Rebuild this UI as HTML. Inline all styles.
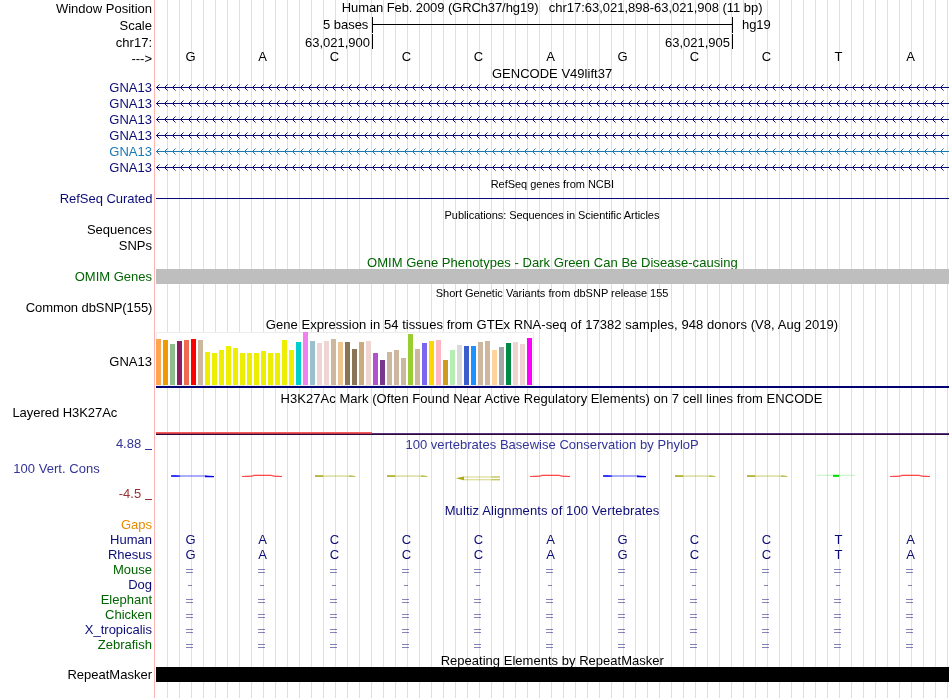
<!DOCTYPE html><html><head><meta charset="utf-8"><style>html,body{margin:0;padding:0;background:#fff;overflow:hidden}svg{display:block;will-change:transform}</style></head><body>
<svg width="950" height="698" viewBox="0 0 950 698" shape-rendering="crispEdges">
<rect x="0" y="0" width="950" height="698" fill="#fff"/>
<path d="M167.5 0V698M179.5 0V698M191.5 0V698M203.5 0V698M215.5 0V698M227.5 0V698M239.5 0V698M251.5 0V698M263.5 0V698M275.5 0V698M287.5 0V698M299.5 0V698M311.5 0V698M323.5 0V698M335.5 0V698M347.5 0V698M359.5 0V698M371.5 0V698M383.5 0V698M395.5 0V698M407.5 0V698M419.5 0V698M431.5 0V698M443.5 0V698M455.5 0V698M467.5 0V698M479.5 0V698M491.5 0V698M503.5 0V698M515.5 0V698M527.5 0V698M539.5 0V698M551.5 0V698M563.5 0V698M575.5 0V698M587.5 0V698M599.5 0V698M611.5 0V698M623.5 0V698M635.5 0V698M647.5 0V698M659.5 0V698M671.5 0V698M683.5 0V698M695.5 0V698M707.5 0V698M719.5 0V698M731.5 0V698M743.5 0V698M755.5 0V698M767.5 0V698M779.5 0V698M791.5 0V698M803.5 0V698M815.5 0V698M827.5 0V698M839.5 0V698M851.5 0V698M863.5 0V698M875.5 0V698M887.5 0V698M899.5 0V698M911.5 0V698M923.5 0V698M935.5 0V698M947.5 0V698" stroke="#dcdcff" stroke-width="1" fill="none"/>
<path d="M154.5 0V698" stroke="#ffb4b4" stroke-width="1"/>
<text x="152" y="13" font-size="13" text-anchor="end" fill="#000" font-family="Liberation Sans, sans-serif"  shape-rendering="auto">Window Position</text>
<text x="341.73" y="12" font-size="13" text-anchor="start" fill="#000" font-family="Liberation Sans, sans-serif"  textLength="196.77" lengthAdjust="spacing" shape-rendering="auto">Human Feb. 2009 (GRCh37/hg19)</text>
<text x="548.75" y="12" font-size="13" text-anchor="start" fill="#000" font-family="Liberation Sans, sans-serif"  textLength="213.86" lengthAdjust="spacing" shape-rendering="auto">chr17:63,021,898-63,021,908 (11 bp)</text>
<text x="152" y="30" font-size="13" text-anchor="end" fill="#000" font-family="Liberation Sans, sans-serif"  shape-rendering="auto">Scale</text>
<text x="322.88" y="29" font-size="13" text-anchor="start" fill="#000" font-family="Liberation Sans, sans-serif"  textLength="45.49" lengthAdjust="spacing" shape-rendering="auto">5 bases</text>
<path d="M372 24.5H733M372.5 17V33M732.5 17V33M372.5 34V49M732.5 34V49" stroke="#000" stroke-width="1"/>
<text x="742.1" y="29" font-size="13" text-anchor="start" fill="#000" font-family="Liberation Sans, sans-serif"  textLength="28.52" lengthAdjust="spacing" shape-rendering="auto">hg19</text>
<text x="152" y="47" font-size="13" text-anchor="end" fill="#000" font-family="Liberation Sans, sans-serif"  shape-rendering="auto">chr17:</text>
<text x="370" y="47" font-size="13" text-anchor="end" fill="#000" font-family="Liberation Sans, sans-serif"  shape-rendering="auto">63,021,900</text>
<text x="730" y="47" font-size="13" text-anchor="end" fill="#000" font-family="Liberation Sans, sans-serif"  shape-rendering="auto">63,021,905</text>
<text x="152" y="63" font-size="13" text-anchor="end" fill="#000" font-family="Liberation Sans, sans-serif"  shape-rendering="auto">---&gt;</text>
<text x="190.5" y="61" font-size="13" text-anchor="middle" fill="#000" font-family="Liberation Sans, sans-serif"  shape-rendering="auto">G</text>
<text x="262.5" y="61" font-size="13" text-anchor="middle" fill="#000" font-family="Liberation Sans, sans-serif"  shape-rendering="auto">A</text>
<text x="334.5" y="61" font-size="13" text-anchor="middle" fill="#000" font-family="Liberation Sans, sans-serif"  shape-rendering="auto">C</text>
<text x="406.5" y="61" font-size="13" text-anchor="middle" fill="#000" font-family="Liberation Sans, sans-serif"  shape-rendering="auto">C</text>
<text x="478.5" y="61" font-size="13" text-anchor="middle" fill="#000" font-family="Liberation Sans, sans-serif"  shape-rendering="auto">C</text>
<text x="550.5" y="61" font-size="13" text-anchor="middle" fill="#000" font-family="Liberation Sans, sans-serif"  shape-rendering="auto">A</text>
<text x="622.5" y="61" font-size="13" text-anchor="middle" fill="#000" font-family="Liberation Sans, sans-serif"  shape-rendering="auto">G</text>
<text x="694.5" y="61" font-size="13" text-anchor="middle" fill="#000" font-family="Liberation Sans, sans-serif"  shape-rendering="auto">C</text>
<text x="766.5" y="61" font-size="13" text-anchor="middle" fill="#000" font-family="Liberation Sans, sans-serif"  shape-rendering="auto">C</text>
<text x="838.5" y="61" font-size="13" text-anchor="middle" fill="#000" font-family="Liberation Sans, sans-serif"  shape-rendering="auto">T</text>
<text x="910.5" y="61" font-size="13" text-anchor="middle" fill="#000" font-family="Liberation Sans, sans-serif"  shape-rendering="auto">A</text>
<text x="491.95" y="78" font-size="13" text-anchor="start" fill="#000" font-family="Liberation Sans, sans-serif"  textLength="120.21" lengthAdjust="spacing" shape-rendering="auto">GENCODE V49lift37</text>
<path d="M156 87.5H949" stroke="#0c0c78" stroke-width="1"/>
<path d="M156 87h1v1h-1zM157 86h1v1h-1zM157 88h1v1h-1zM158 85h1v1h-1zM158 89h1v1h-1zM164 87h1v1h-1zM165 86h1v1h-1zM165 88h1v1h-1zM166 85h1v1h-1zM166 89h1v1h-1zM172 87h1v1h-1zM173 86h1v1h-1zM173 88h1v1h-1zM174 85h1v1h-1zM174 89h1v1h-1zM180 87h1v1h-1zM181 86h1v1h-1zM181 88h1v1h-1zM182 85h1v1h-1zM182 89h1v1h-1zM188 87h1v1h-1zM189 86h1v1h-1zM189 88h1v1h-1zM190 85h1v1h-1zM190 89h1v1h-1zM196 87h1v1h-1zM197 86h1v1h-1zM197 88h1v1h-1zM198 85h1v1h-1zM198 89h1v1h-1zM204 87h1v1h-1zM205 86h1v1h-1zM205 88h1v1h-1zM206 85h1v1h-1zM206 89h1v1h-1zM212 87h1v1h-1zM213 86h1v1h-1zM213 88h1v1h-1zM214 85h1v1h-1zM214 89h1v1h-1zM220 87h1v1h-1zM221 86h1v1h-1zM221 88h1v1h-1zM222 85h1v1h-1zM222 89h1v1h-1zM228 87h1v1h-1zM229 86h1v1h-1zM229 88h1v1h-1zM230 85h1v1h-1zM230 89h1v1h-1zM236 87h1v1h-1zM237 86h1v1h-1zM237 88h1v1h-1zM238 85h1v1h-1zM238 89h1v1h-1zM244 87h1v1h-1zM245 86h1v1h-1zM245 88h1v1h-1zM246 85h1v1h-1zM246 89h1v1h-1zM252 87h1v1h-1zM253 86h1v1h-1zM253 88h1v1h-1zM254 85h1v1h-1zM254 89h1v1h-1zM260 87h1v1h-1zM261 86h1v1h-1zM261 88h1v1h-1zM262 85h1v1h-1zM262 89h1v1h-1zM268 87h1v1h-1zM269 86h1v1h-1zM269 88h1v1h-1zM270 85h1v1h-1zM270 89h1v1h-1zM276 87h1v1h-1zM277 86h1v1h-1zM277 88h1v1h-1zM278 85h1v1h-1zM278 89h1v1h-1zM284 87h1v1h-1zM285 86h1v1h-1zM285 88h1v1h-1zM286 85h1v1h-1zM286 89h1v1h-1zM292 87h1v1h-1zM293 86h1v1h-1zM293 88h1v1h-1zM294 85h1v1h-1zM294 89h1v1h-1zM300 87h1v1h-1zM301 86h1v1h-1zM301 88h1v1h-1zM302 85h1v1h-1zM302 89h1v1h-1zM308 87h1v1h-1zM309 86h1v1h-1zM309 88h1v1h-1zM310 85h1v1h-1zM310 89h1v1h-1zM316 87h1v1h-1zM317 86h1v1h-1zM317 88h1v1h-1zM318 85h1v1h-1zM318 89h1v1h-1zM324 87h1v1h-1zM325 86h1v1h-1zM325 88h1v1h-1zM326 85h1v1h-1zM326 89h1v1h-1zM332 87h1v1h-1zM333 86h1v1h-1zM333 88h1v1h-1zM334 85h1v1h-1zM334 89h1v1h-1zM340 87h1v1h-1zM341 86h1v1h-1zM341 88h1v1h-1zM342 85h1v1h-1zM342 89h1v1h-1zM348 87h1v1h-1zM349 86h1v1h-1zM349 88h1v1h-1zM350 85h1v1h-1zM350 89h1v1h-1zM356 87h1v1h-1zM357 86h1v1h-1zM357 88h1v1h-1zM358 85h1v1h-1zM358 89h1v1h-1zM364 87h1v1h-1zM365 86h1v1h-1zM365 88h1v1h-1zM366 85h1v1h-1zM366 89h1v1h-1zM372 87h1v1h-1zM373 86h1v1h-1zM373 88h1v1h-1zM374 85h1v1h-1zM374 89h1v1h-1zM380 87h1v1h-1zM381 86h1v1h-1zM381 88h1v1h-1zM382 85h1v1h-1zM382 89h1v1h-1zM388 87h1v1h-1zM389 86h1v1h-1zM389 88h1v1h-1zM390 85h1v1h-1zM390 89h1v1h-1zM396 87h1v1h-1zM397 86h1v1h-1zM397 88h1v1h-1zM398 85h1v1h-1zM398 89h1v1h-1zM404 87h1v1h-1zM405 86h1v1h-1zM405 88h1v1h-1zM406 85h1v1h-1zM406 89h1v1h-1zM412 87h1v1h-1zM413 86h1v1h-1zM413 88h1v1h-1zM414 85h1v1h-1zM414 89h1v1h-1zM420 87h1v1h-1zM421 86h1v1h-1zM421 88h1v1h-1zM422 85h1v1h-1zM422 89h1v1h-1zM428 87h1v1h-1zM429 86h1v1h-1zM429 88h1v1h-1zM430 85h1v1h-1zM430 89h1v1h-1zM436 87h1v1h-1zM437 86h1v1h-1zM437 88h1v1h-1zM438 85h1v1h-1zM438 89h1v1h-1zM444 87h1v1h-1zM445 86h1v1h-1zM445 88h1v1h-1zM446 85h1v1h-1zM446 89h1v1h-1zM452 87h1v1h-1zM453 86h1v1h-1zM453 88h1v1h-1zM454 85h1v1h-1zM454 89h1v1h-1zM460 87h1v1h-1zM461 86h1v1h-1zM461 88h1v1h-1zM462 85h1v1h-1zM462 89h1v1h-1zM468 87h1v1h-1zM469 86h1v1h-1zM469 88h1v1h-1zM470 85h1v1h-1zM470 89h1v1h-1zM476 87h1v1h-1zM477 86h1v1h-1zM477 88h1v1h-1zM478 85h1v1h-1zM478 89h1v1h-1zM484 87h1v1h-1zM485 86h1v1h-1zM485 88h1v1h-1zM486 85h1v1h-1zM486 89h1v1h-1zM492 87h1v1h-1zM493 86h1v1h-1zM493 88h1v1h-1zM494 85h1v1h-1zM494 89h1v1h-1zM500 87h1v1h-1zM501 86h1v1h-1zM501 88h1v1h-1zM502 85h1v1h-1zM502 89h1v1h-1zM508 87h1v1h-1zM509 86h1v1h-1zM509 88h1v1h-1zM510 85h1v1h-1zM510 89h1v1h-1zM516 87h1v1h-1zM517 86h1v1h-1zM517 88h1v1h-1zM518 85h1v1h-1zM518 89h1v1h-1zM524 87h1v1h-1zM525 86h1v1h-1zM525 88h1v1h-1zM526 85h1v1h-1zM526 89h1v1h-1zM532 87h1v1h-1zM533 86h1v1h-1zM533 88h1v1h-1zM534 85h1v1h-1zM534 89h1v1h-1zM540 87h1v1h-1zM541 86h1v1h-1zM541 88h1v1h-1zM542 85h1v1h-1zM542 89h1v1h-1zM548 87h1v1h-1zM549 86h1v1h-1zM549 88h1v1h-1zM550 85h1v1h-1zM550 89h1v1h-1zM556 87h1v1h-1zM557 86h1v1h-1zM557 88h1v1h-1zM558 85h1v1h-1zM558 89h1v1h-1zM564 87h1v1h-1zM565 86h1v1h-1zM565 88h1v1h-1zM566 85h1v1h-1zM566 89h1v1h-1zM572 87h1v1h-1zM573 86h1v1h-1zM573 88h1v1h-1zM574 85h1v1h-1zM574 89h1v1h-1zM580 87h1v1h-1zM581 86h1v1h-1zM581 88h1v1h-1zM582 85h1v1h-1zM582 89h1v1h-1zM588 87h1v1h-1zM589 86h1v1h-1zM589 88h1v1h-1zM590 85h1v1h-1zM590 89h1v1h-1zM596 87h1v1h-1zM597 86h1v1h-1zM597 88h1v1h-1zM598 85h1v1h-1zM598 89h1v1h-1zM604 87h1v1h-1zM605 86h1v1h-1zM605 88h1v1h-1zM606 85h1v1h-1zM606 89h1v1h-1zM612 87h1v1h-1zM613 86h1v1h-1zM613 88h1v1h-1zM614 85h1v1h-1zM614 89h1v1h-1zM620 87h1v1h-1zM621 86h1v1h-1zM621 88h1v1h-1zM622 85h1v1h-1zM622 89h1v1h-1zM628 87h1v1h-1zM629 86h1v1h-1zM629 88h1v1h-1zM630 85h1v1h-1zM630 89h1v1h-1zM636 87h1v1h-1zM637 86h1v1h-1zM637 88h1v1h-1zM638 85h1v1h-1zM638 89h1v1h-1zM644 87h1v1h-1zM645 86h1v1h-1zM645 88h1v1h-1zM646 85h1v1h-1zM646 89h1v1h-1zM652 87h1v1h-1zM653 86h1v1h-1zM653 88h1v1h-1zM654 85h1v1h-1zM654 89h1v1h-1zM660 87h1v1h-1zM661 86h1v1h-1zM661 88h1v1h-1zM662 85h1v1h-1zM662 89h1v1h-1zM668 87h1v1h-1zM669 86h1v1h-1zM669 88h1v1h-1zM670 85h1v1h-1zM670 89h1v1h-1zM676 87h1v1h-1zM677 86h1v1h-1zM677 88h1v1h-1zM678 85h1v1h-1zM678 89h1v1h-1zM684 87h1v1h-1zM685 86h1v1h-1zM685 88h1v1h-1zM686 85h1v1h-1zM686 89h1v1h-1zM692 87h1v1h-1zM693 86h1v1h-1zM693 88h1v1h-1zM694 85h1v1h-1zM694 89h1v1h-1zM700 87h1v1h-1zM701 86h1v1h-1zM701 88h1v1h-1zM702 85h1v1h-1zM702 89h1v1h-1zM708 87h1v1h-1zM709 86h1v1h-1zM709 88h1v1h-1zM710 85h1v1h-1zM710 89h1v1h-1zM716 87h1v1h-1zM717 86h1v1h-1zM717 88h1v1h-1zM718 85h1v1h-1zM718 89h1v1h-1zM724 87h1v1h-1zM725 86h1v1h-1zM725 88h1v1h-1zM726 85h1v1h-1zM726 89h1v1h-1zM732 87h1v1h-1zM733 86h1v1h-1zM733 88h1v1h-1zM734 85h1v1h-1zM734 89h1v1h-1zM740 87h1v1h-1zM741 86h1v1h-1zM741 88h1v1h-1zM742 85h1v1h-1zM742 89h1v1h-1zM748 87h1v1h-1zM749 86h1v1h-1zM749 88h1v1h-1zM750 85h1v1h-1zM750 89h1v1h-1zM756 87h1v1h-1zM757 86h1v1h-1zM757 88h1v1h-1zM758 85h1v1h-1zM758 89h1v1h-1zM764 87h1v1h-1zM765 86h1v1h-1zM765 88h1v1h-1zM766 85h1v1h-1zM766 89h1v1h-1zM772 87h1v1h-1zM773 86h1v1h-1zM773 88h1v1h-1zM774 85h1v1h-1zM774 89h1v1h-1zM780 87h1v1h-1zM781 86h1v1h-1zM781 88h1v1h-1zM782 85h1v1h-1zM782 89h1v1h-1zM788 87h1v1h-1zM789 86h1v1h-1zM789 88h1v1h-1zM790 85h1v1h-1zM790 89h1v1h-1zM796 87h1v1h-1zM797 86h1v1h-1zM797 88h1v1h-1zM798 85h1v1h-1zM798 89h1v1h-1zM804 87h1v1h-1zM805 86h1v1h-1zM805 88h1v1h-1zM806 85h1v1h-1zM806 89h1v1h-1zM812 87h1v1h-1zM813 86h1v1h-1zM813 88h1v1h-1zM814 85h1v1h-1zM814 89h1v1h-1zM820 87h1v1h-1zM821 86h1v1h-1zM821 88h1v1h-1zM822 85h1v1h-1zM822 89h1v1h-1zM828 87h1v1h-1zM829 86h1v1h-1zM829 88h1v1h-1zM830 85h1v1h-1zM830 89h1v1h-1zM836 87h1v1h-1zM837 86h1v1h-1zM837 88h1v1h-1zM838 85h1v1h-1zM838 89h1v1h-1zM844 87h1v1h-1zM845 86h1v1h-1zM845 88h1v1h-1zM846 85h1v1h-1zM846 89h1v1h-1zM852 87h1v1h-1zM853 86h1v1h-1zM853 88h1v1h-1zM854 85h1v1h-1zM854 89h1v1h-1zM860 87h1v1h-1zM861 86h1v1h-1zM861 88h1v1h-1zM862 85h1v1h-1zM862 89h1v1h-1zM868 87h1v1h-1zM869 86h1v1h-1zM869 88h1v1h-1zM870 85h1v1h-1zM870 89h1v1h-1zM876 87h1v1h-1zM877 86h1v1h-1zM877 88h1v1h-1zM878 85h1v1h-1zM878 89h1v1h-1zM884 87h1v1h-1zM885 86h1v1h-1zM885 88h1v1h-1zM886 85h1v1h-1zM886 89h1v1h-1zM892 87h1v1h-1zM893 86h1v1h-1zM893 88h1v1h-1zM894 85h1v1h-1zM894 89h1v1h-1zM900 87h1v1h-1zM901 86h1v1h-1zM901 88h1v1h-1zM902 85h1v1h-1zM902 89h1v1h-1zM908 87h1v1h-1zM909 86h1v1h-1zM909 88h1v1h-1zM910 85h1v1h-1zM910 89h1v1h-1zM916 87h1v1h-1zM917 86h1v1h-1zM917 88h1v1h-1zM918 85h1v1h-1zM918 89h1v1h-1zM924 87h1v1h-1zM925 86h1v1h-1zM925 88h1v1h-1zM926 85h1v1h-1zM926 89h1v1h-1zM932 87h1v1h-1zM933 86h1v1h-1zM933 88h1v1h-1zM934 85h1v1h-1zM934 89h1v1h-1zM940 87h1v1h-1zM941 86h1v1h-1zM941 88h1v1h-1zM942 85h1v1h-1zM942 89h1v1h-1z" fill="#0c0c78"/>
<path d="M159 84h1v1h-1zM159 90h1v1h-1zM167 84h1v1h-1zM167 90h1v1h-1zM175 84h1v1h-1zM175 90h1v1h-1zM183 84h1v1h-1zM183 90h1v1h-1zM191 84h1v1h-1zM191 90h1v1h-1zM199 84h1v1h-1zM199 90h1v1h-1zM207 84h1v1h-1zM207 90h1v1h-1zM215 84h1v1h-1zM215 90h1v1h-1zM223 84h1v1h-1zM223 90h1v1h-1zM231 84h1v1h-1zM231 90h1v1h-1zM239 84h1v1h-1zM239 90h1v1h-1zM247 84h1v1h-1zM247 90h1v1h-1zM255 84h1v1h-1zM255 90h1v1h-1zM263 84h1v1h-1zM263 90h1v1h-1zM271 84h1v1h-1zM271 90h1v1h-1zM279 84h1v1h-1zM279 90h1v1h-1zM287 84h1v1h-1zM287 90h1v1h-1zM295 84h1v1h-1zM295 90h1v1h-1zM303 84h1v1h-1zM303 90h1v1h-1zM311 84h1v1h-1zM311 90h1v1h-1zM319 84h1v1h-1zM319 90h1v1h-1zM327 84h1v1h-1zM327 90h1v1h-1zM335 84h1v1h-1zM335 90h1v1h-1zM343 84h1v1h-1zM343 90h1v1h-1zM351 84h1v1h-1zM351 90h1v1h-1zM359 84h1v1h-1zM359 90h1v1h-1zM367 84h1v1h-1zM367 90h1v1h-1zM375 84h1v1h-1zM375 90h1v1h-1zM383 84h1v1h-1zM383 90h1v1h-1zM391 84h1v1h-1zM391 90h1v1h-1zM399 84h1v1h-1zM399 90h1v1h-1zM407 84h1v1h-1zM407 90h1v1h-1zM415 84h1v1h-1zM415 90h1v1h-1zM423 84h1v1h-1zM423 90h1v1h-1zM431 84h1v1h-1zM431 90h1v1h-1zM439 84h1v1h-1zM439 90h1v1h-1zM447 84h1v1h-1zM447 90h1v1h-1zM455 84h1v1h-1zM455 90h1v1h-1zM463 84h1v1h-1zM463 90h1v1h-1zM471 84h1v1h-1zM471 90h1v1h-1zM479 84h1v1h-1zM479 90h1v1h-1zM487 84h1v1h-1zM487 90h1v1h-1zM495 84h1v1h-1zM495 90h1v1h-1zM503 84h1v1h-1zM503 90h1v1h-1zM511 84h1v1h-1zM511 90h1v1h-1zM519 84h1v1h-1zM519 90h1v1h-1zM527 84h1v1h-1zM527 90h1v1h-1zM535 84h1v1h-1zM535 90h1v1h-1zM543 84h1v1h-1zM543 90h1v1h-1zM551 84h1v1h-1zM551 90h1v1h-1zM559 84h1v1h-1zM559 90h1v1h-1zM567 84h1v1h-1zM567 90h1v1h-1zM575 84h1v1h-1zM575 90h1v1h-1zM583 84h1v1h-1zM583 90h1v1h-1zM591 84h1v1h-1zM591 90h1v1h-1zM599 84h1v1h-1zM599 90h1v1h-1zM607 84h1v1h-1zM607 90h1v1h-1zM615 84h1v1h-1zM615 90h1v1h-1zM623 84h1v1h-1zM623 90h1v1h-1zM631 84h1v1h-1zM631 90h1v1h-1zM639 84h1v1h-1zM639 90h1v1h-1zM647 84h1v1h-1zM647 90h1v1h-1zM655 84h1v1h-1zM655 90h1v1h-1zM663 84h1v1h-1zM663 90h1v1h-1zM671 84h1v1h-1zM671 90h1v1h-1zM679 84h1v1h-1zM679 90h1v1h-1zM687 84h1v1h-1zM687 90h1v1h-1zM695 84h1v1h-1zM695 90h1v1h-1zM703 84h1v1h-1zM703 90h1v1h-1zM711 84h1v1h-1zM711 90h1v1h-1zM719 84h1v1h-1zM719 90h1v1h-1zM727 84h1v1h-1zM727 90h1v1h-1zM735 84h1v1h-1zM735 90h1v1h-1zM743 84h1v1h-1zM743 90h1v1h-1zM751 84h1v1h-1zM751 90h1v1h-1zM759 84h1v1h-1zM759 90h1v1h-1zM767 84h1v1h-1zM767 90h1v1h-1zM775 84h1v1h-1zM775 90h1v1h-1zM783 84h1v1h-1zM783 90h1v1h-1zM791 84h1v1h-1zM791 90h1v1h-1zM799 84h1v1h-1zM799 90h1v1h-1zM807 84h1v1h-1zM807 90h1v1h-1zM815 84h1v1h-1zM815 90h1v1h-1zM823 84h1v1h-1zM823 90h1v1h-1zM831 84h1v1h-1zM831 90h1v1h-1zM839 84h1v1h-1zM839 90h1v1h-1zM847 84h1v1h-1zM847 90h1v1h-1zM855 84h1v1h-1zM855 90h1v1h-1zM863 84h1v1h-1zM863 90h1v1h-1zM871 84h1v1h-1zM871 90h1v1h-1zM879 84h1v1h-1zM879 90h1v1h-1zM887 84h1v1h-1zM887 90h1v1h-1zM895 84h1v1h-1zM895 90h1v1h-1zM903 84h1v1h-1zM903 90h1v1h-1zM911 84h1v1h-1zM911 90h1v1h-1zM919 84h1v1h-1zM919 90h1v1h-1zM927 84h1v1h-1zM927 90h1v1h-1zM935 84h1v1h-1zM935 90h1v1h-1zM943 84h1v1h-1zM943 90h1v1h-1z" fill="#0c0c78" opacity="0.55"/>
<text x="152" y="92" font-size="13" text-anchor="end" fill="#0c0c78" font-family="Liberation Sans, sans-serif"  shape-rendering="auto">GNA13</text>
<path d="M156 103.5H949" stroke="#0c0c78" stroke-width="1"/>
<path d="M156 103h1v1h-1zM157 102h1v1h-1zM157 104h1v1h-1zM158 101h1v1h-1zM158 105h1v1h-1zM164 103h1v1h-1zM165 102h1v1h-1zM165 104h1v1h-1zM166 101h1v1h-1zM166 105h1v1h-1zM172 103h1v1h-1zM173 102h1v1h-1zM173 104h1v1h-1zM174 101h1v1h-1zM174 105h1v1h-1zM180 103h1v1h-1zM181 102h1v1h-1zM181 104h1v1h-1zM182 101h1v1h-1zM182 105h1v1h-1zM188 103h1v1h-1zM189 102h1v1h-1zM189 104h1v1h-1zM190 101h1v1h-1zM190 105h1v1h-1zM196 103h1v1h-1zM197 102h1v1h-1zM197 104h1v1h-1zM198 101h1v1h-1zM198 105h1v1h-1zM204 103h1v1h-1zM205 102h1v1h-1zM205 104h1v1h-1zM206 101h1v1h-1zM206 105h1v1h-1zM212 103h1v1h-1zM213 102h1v1h-1zM213 104h1v1h-1zM214 101h1v1h-1zM214 105h1v1h-1zM220 103h1v1h-1zM221 102h1v1h-1zM221 104h1v1h-1zM222 101h1v1h-1zM222 105h1v1h-1zM228 103h1v1h-1zM229 102h1v1h-1zM229 104h1v1h-1zM230 101h1v1h-1zM230 105h1v1h-1zM236 103h1v1h-1zM237 102h1v1h-1zM237 104h1v1h-1zM238 101h1v1h-1zM238 105h1v1h-1zM244 103h1v1h-1zM245 102h1v1h-1zM245 104h1v1h-1zM246 101h1v1h-1zM246 105h1v1h-1zM252 103h1v1h-1zM253 102h1v1h-1zM253 104h1v1h-1zM254 101h1v1h-1zM254 105h1v1h-1zM260 103h1v1h-1zM261 102h1v1h-1zM261 104h1v1h-1zM262 101h1v1h-1zM262 105h1v1h-1zM268 103h1v1h-1zM269 102h1v1h-1zM269 104h1v1h-1zM270 101h1v1h-1zM270 105h1v1h-1zM276 103h1v1h-1zM277 102h1v1h-1zM277 104h1v1h-1zM278 101h1v1h-1zM278 105h1v1h-1zM284 103h1v1h-1zM285 102h1v1h-1zM285 104h1v1h-1zM286 101h1v1h-1zM286 105h1v1h-1zM292 103h1v1h-1zM293 102h1v1h-1zM293 104h1v1h-1zM294 101h1v1h-1zM294 105h1v1h-1zM300 103h1v1h-1zM301 102h1v1h-1zM301 104h1v1h-1zM302 101h1v1h-1zM302 105h1v1h-1zM308 103h1v1h-1zM309 102h1v1h-1zM309 104h1v1h-1zM310 101h1v1h-1zM310 105h1v1h-1zM316 103h1v1h-1zM317 102h1v1h-1zM317 104h1v1h-1zM318 101h1v1h-1zM318 105h1v1h-1zM324 103h1v1h-1zM325 102h1v1h-1zM325 104h1v1h-1zM326 101h1v1h-1zM326 105h1v1h-1zM332 103h1v1h-1zM333 102h1v1h-1zM333 104h1v1h-1zM334 101h1v1h-1zM334 105h1v1h-1zM340 103h1v1h-1zM341 102h1v1h-1zM341 104h1v1h-1zM342 101h1v1h-1zM342 105h1v1h-1zM348 103h1v1h-1zM349 102h1v1h-1zM349 104h1v1h-1zM350 101h1v1h-1zM350 105h1v1h-1zM356 103h1v1h-1zM357 102h1v1h-1zM357 104h1v1h-1zM358 101h1v1h-1zM358 105h1v1h-1zM364 103h1v1h-1zM365 102h1v1h-1zM365 104h1v1h-1zM366 101h1v1h-1zM366 105h1v1h-1zM372 103h1v1h-1zM373 102h1v1h-1zM373 104h1v1h-1zM374 101h1v1h-1zM374 105h1v1h-1zM380 103h1v1h-1zM381 102h1v1h-1zM381 104h1v1h-1zM382 101h1v1h-1zM382 105h1v1h-1zM388 103h1v1h-1zM389 102h1v1h-1zM389 104h1v1h-1zM390 101h1v1h-1zM390 105h1v1h-1zM396 103h1v1h-1zM397 102h1v1h-1zM397 104h1v1h-1zM398 101h1v1h-1zM398 105h1v1h-1zM404 103h1v1h-1zM405 102h1v1h-1zM405 104h1v1h-1zM406 101h1v1h-1zM406 105h1v1h-1zM412 103h1v1h-1zM413 102h1v1h-1zM413 104h1v1h-1zM414 101h1v1h-1zM414 105h1v1h-1zM420 103h1v1h-1zM421 102h1v1h-1zM421 104h1v1h-1zM422 101h1v1h-1zM422 105h1v1h-1zM428 103h1v1h-1zM429 102h1v1h-1zM429 104h1v1h-1zM430 101h1v1h-1zM430 105h1v1h-1zM436 103h1v1h-1zM437 102h1v1h-1zM437 104h1v1h-1zM438 101h1v1h-1zM438 105h1v1h-1zM444 103h1v1h-1zM445 102h1v1h-1zM445 104h1v1h-1zM446 101h1v1h-1zM446 105h1v1h-1zM452 103h1v1h-1zM453 102h1v1h-1zM453 104h1v1h-1zM454 101h1v1h-1zM454 105h1v1h-1zM460 103h1v1h-1zM461 102h1v1h-1zM461 104h1v1h-1zM462 101h1v1h-1zM462 105h1v1h-1zM468 103h1v1h-1zM469 102h1v1h-1zM469 104h1v1h-1zM470 101h1v1h-1zM470 105h1v1h-1zM476 103h1v1h-1zM477 102h1v1h-1zM477 104h1v1h-1zM478 101h1v1h-1zM478 105h1v1h-1zM484 103h1v1h-1zM485 102h1v1h-1zM485 104h1v1h-1zM486 101h1v1h-1zM486 105h1v1h-1zM492 103h1v1h-1zM493 102h1v1h-1zM493 104h1v1h-1zM494 101h1v1h-1zM494 105h1v1h-1zM500 103h1v1h-1zM501 102h1v1h-1zM501 104h1v1h-1zM502 101h1v1h-1zM502 105h1v1h-1zM508 103h1v1h-1zM509 102h1v1h-1zM509 104h1v1h-1zM510 101h1v1h-1zM510 105h1v1h-1zM516 103h1v1h-1zM517 102h1v1h-1zM517 104h1v1h-1zM518 101h1v1h-1zM518 105h1v1h-1zM524 103h1v1h-1zM525 102h1v1h-1zM525 104h1v1h-1zM526 101h1v1h-1zM526 105h1v1h-1zM532 103h1v1h-1zM533 102h1v1h-1zM533 104h1v1h-1zM534 101h1v1h-1zM534 105h1v1h-1zM540 103h1v1h-1zM541 102h1v1h-1zM541 104h1v1h-1zM542 101h1v1h-1zM542 105h1v1h-1zM548 103h1v1h-1zM549 102h1v1h-1zM549 104h1v1h-1zM550 101h1v1h-1zM550 105h1v1h-1zM556 103h1v1h-1zM557 102h1v1h-1zM557 104h1v1h-1zM558 101h1v1h-1zM558 105h1v1h-1zM564 103h1v1h-1zM565 102h1v1h-1zM565 104h1v1h-1zM566 101h1v1h-1zM566 105h1v1h-1zM572 103h1v1h-1zM573 102h1v1h-1zM573 104h1v1h-1zM574 101h1v1h-1zM574 105h1v1h-1zM580 103h1v1h-1zM581 102h1v1h-1zM581 104h1v1h-1zM582 101h1v1h-1zM582 105h1v1h-1zM588 103h1v1h-1zM589 102h1v1h-1zM589 104h1v1h-1zM590 101h1v1h-1zM590 105h1v1h-1zM596 103h1v1h-1zM597 102h1v1h-1zM597 104h1v1h-1zM598 101h1v1h-1zM598 105h1v1h-1zM604 103h1v1h-1zM605 102h1v1h-1zM605 104h1v1h-1zM606 101h1v1h-1zM606 105h1v1h-1zM612 103h1v1h-1zM613 102h1v1h-1zM613 104h1v1h-1zM614 101h1v1h-1zM614 105h1v1h-1zM620 103h1v1h-1zM621 102h1v1h-1zM621 104h1v1h-1zM622 101h1v1h-1zM622 105h1v1h-1zM628 103h1v1h-1zM629 102h1v1h-1zM629 104h1v1h-1zM630 101h1v1h-1zM630 105h1v1h-1zM636 103h1v1h-1zM637 102h1v1h-1zM637 104h1v1h-1zM638 101h1v1h-1zM638 105h1v1h-1zM644 103h1v1h-1zM645 102h1v1h-1zM645 104h1v1h-1zM646 101h1v1h-1zM646 105h1v1h-1zM652 103h1v1h-1zM653 102h1v1h-1zM653 104h1v1h-1zM654 101h1v1h-1zM654 105h1v1h-1zM660 103h1v1h-1zM661 102h1v1h-1zM661 104h1v1h-1zM662 101h1v1h-1zM662 105h1v1h-1zM668 103h1v1h-1zM669 102h1v1h-1zM669 104h1v1h-1zM670 101h1v1h-1zM670 105h1v1h-1zM676 103h1v1h-1zM677 102h1v1h-1zM677 104h1v1h-1zM678 101h1v1h-1zM678 105h1v1h-1zM684 103h1v1h-1zM685 102h1v1h-1zM685 104h1v1h-1zM686 101h1v1h-1zM686 105h1v1h-1zM692 103h1v1h-1zM693 102h1v1h-1zM693 104h1v1h-1zM694 101h1v1h-1zM694 105h1v1h-1zM700 103h1v1h-1zM701 102h1v1h-1zM701 104h1v1h-1zM702 101h1v1h-1zM702 105h1v1h-1zM708 103h1v1h-1zM709 102h1v1h-1zM709 104h1v1h-1zM710 101h1v1h-1zM710 105h1v1h-1zM716 103h1v1h-1zM717 102h1v1h-1zM717 104h1v1h-1zM718 101h1v1h-1zM718 105h1v1h-1zM724 103h1v1h-1zM725 102h1v1h-1zM725 104h1v1h-1zM726 101h1v1h-1zM726 105h1v1h-1zM732 103h1v1h-1zM733 102h1v1h-1zM733 104h1v1h-1zM734 101h1v1h-1zM734 105h1v1h-1zM740 103h1v1h-1zM741 102h1v1h-1zM741 104h1v1h-1zM742 101h1v1h-1zM742 105h1v1h-1zM748 103h1v1h-1zM749 102h1v1h-1zM749 104h1v1h-1zM750 101h1v1h-1zM750 105h1v1h-1zM756 103h1v1h-1zM757 102h1v1h-1zM757 104h1v1h-1zM758 101h1v1h-1zM758 105h1v1h-1zM764 103h1v1h-1zM765 102h1v1h-1zM765 104h1v1h-1zM766 101h1v1h-1zM766 105h1v1h-1zM772 103h1v1h-1zM773 102h1v1h-1zM773 104h1v1h-1zM774 101h1v1h-1zM774 105h1v1h-1zM780 103h1v1h-1zM781 102h1v1h-1zM781 104h1v1h-1zM782 101h1v1h-1zM782 105h1v1h-1zM788 103h1v1h-1zM789 102h1v1h-1zM789 104h1v1h-1zM790 101h1v1h-1zM790 105h1v1h-1zM796 103h1v1h-1zM797 102h1v1h-1zM797 104h1v1h-1zM798 101h1v1h-1zM798 105h1v1h-1zM804 103h1v1h-1zM805 102h1v1h-1zM805 104h1v1h-1zM806 101h1v1h-1zM806 105h1v1h-1zM812 103h1v1h-1zM813 102h1v1h-1zM813 104h1v1h-1zM814 101h1v1h-1zM814 105h1v1h-1zM820 103h1v1h-1zM821 102h1v1h-1zM821 104h1v1h-1zM822 101h1v1h-1zM822 105h1v1h-1zM828 103h1v1h-1zM829 102h1v1h-1zM829 104h1v1h-1zM830 101h1v1h-1zM830 105h1v1h-1zM836 103h1v1h-1zM837 102h1v1h-1zM837 104h1v1h-1zM838 101h1v1h-1zM838 105h1v1h-1zM844 103h1v1h-1zM845 102h1v1h-1zM845 104h1v1h-1zM846 101h1v1h-1zM846 105h1v1h-1zM852 103h1v1h-1zM853 102h1v1h-1zM853 104h1v1h-1zM854 101h1v1h-1zM854 105h1v1h-1zM860 103h1v1h-1zM861 102h1v1h-1zM861 104h1v1h-1zM862 101h1v1h-1zM862 105h1v1h-1zM868 103h1v1h-1zM869 102h1v1h-1zM869 104h1v1h-1zM870 101h1v1h-1zM870 105h1v1h-1zM876 103h1v1h-1zM877 102h1v1h-1zM877 104h1v1h-1zM878 101h1v1h-1zM878 105h1v1h-1zM884 103h1v1h-1zM885 102h1v1h-1zM885 104h1v1h-1zM886 101h1v1h-1zM886 105h1v1h-1zM892 103h1v1h-1zM893 102h1v1h-1zM893 104h1v1h-1zM894 101h1v1h-1zM894 105h1v1h-1zM900 103h1v1h-1zM901 102h1v1h-1zM901 104h1v1h-1zM902 101h1v1h-1zM902 105h1v1h-1zM908 103h1v1h-1zM909 102h1v1h-1zM909 104h1v1h-1zM910 101h1v1h-1zM910 105h1v1h-1zM916 103h1v1h-1zM917 102h1v1h-1zM917 104h1v1h-1zM918 101h1v1h-1zM918 105h1v1h-1zM924 103h1v1h-1zM925 102h1v1h-1zM925 104h1v1h-1zM926 101h1v1h-1zM926 105h1v1h-1zM932 103h1v1h-1zM933 102h1v1h-1zM933 104h1v1h-1zM934 101h1v1h-1zM934 105h1v1h-1zM940 103h1v1h-1zM941 102h1v1h-1zM941 104h1v1h-1zM942 101h1v1h-1zM942 105h1v1h-1z" fill="#0c0c78"/>
<path d="M159 100h1v1h-1zM159 106h1v1h-1zM167 100h1v1h-1zM167 106h1v1h-1zM175 100h1v1h-1zM175 106h1v1h-1zM183 100h1v1h-1zM183 106h1v1h-1zM191 100h1v1h-1zM191 106h1v1h-1zM199 100h1v1h-1zM199 106h1v1h-1zM207 100h1v1h-1zM207 106h1v1h-1zM215 100h1v1h-1zM215 106h1v1h-1zM223 100h1v1h-1zM223 106h1v1h-1zM231 100h1v1h-1zM231 106h1v1h-1zM239 100h1v1h-1zM239 106h1v1h-1zM247 100h1v1h-1zM247 106h1v1h-1zM255 100h1v1h-1zM255 106h1v1h-1zM263 100h1v1h-1zM263 106h1v1h-1zM271 100h1v1h-1zM271 106h1v1h-1zM279 100h1v1h-1zM279 106h1v1h-1zM287 100h1v1h-1zM287 106h1v1h-1zM295 100h1v1h-1zM295 106h1v1h-1zM303 100h1v1h-1zM303 106h1v1h-1zM311 100h1v1h-1zM311 106h1v1h-1zM319 100h1v1h-1zM319 106h1v1h-1zM327 100h1v1h-1zM327 106h1v1h-1zM335 100h1v1h-1zM335 106h1v1h-1zM343 100h1v1h-1zM343 106h1v1h-1zM351 100h1v1h-1zM351 106h1v1h-1zM359 100h1v1h-1zM359 106h1v1h-1zM367 100h1v1h-1zM367 106h1v1h-1zM375 100h1v1h-1zM375 106h1v1h-1zM383 100h1v1h-1zM383 106h1v1h-1zM391 100h1v1h-1zM391 106h1v1h-1zM399 100h1v1h-1zM399 106h1v1h-1zM407 100h1v1h-1zM407 106h1v1h-1zM415 100h1v1h-1zM415 106h1v1h-1zM423 100h1v1h-1zM423 106h1v1h-1zM431 100h1v1h-1zM431 106h1v1h-1zM439 100h1v1h-1zM439 106h1v1h-1zM447 100h1v1h-1zM447 106h1v1h-1zM455 100h1v1h-1zM455 106h1v1h-1zM463 100h1v1h-1zM463 106h1v1h-1zM471 100h1v1h-1zM471 106h1v1h-1zM479 100h1v1h-1zM479 106h1v1h-1zM487 100h1v1h-1zM487 106h1v1h-1zM495 100h1v1h-1zM495 106h1v1h-1zM503 100h1v1h-1zM503 106h1v1h-1zM511 100h1v1h-1zM511 106h1v1h-1zM519 100h1v1h-1zM519 106h1v1h-1zM527 100h1v1h-1zM527 106h1v1h-1zM535 100h1v1h-1zM535 106h1v1h-1zM543 100h1v1h-1zM543 106h1v1h-1zM551 100h1v1h-1zM551 106h1v1h-1zM559 100h1v1h-1zM559 106h1v1h-1zM567 100h1v1h-1zM567 106h1v1h-1zM575 100h1v1h-1zM575 106h1v1h-1zM583 100h1v1h-1zM583 106h1v1h-1zM591 100h1v1h-1zM591 106h1v1h-1zM599 100h1v1h-1zM599 106h1v1h-1zM607 100h1v1h-1zM607 106h1v1h-1zM615 100h1v1h-1zM615 106h1v1h-1zM623 100h1v1h-1zM623 106h1v1h-1zM631 100h1v1h-1zM631 106h1v1h-1zM639 100h1v1h-1zM639 106h1v1h-1zM647 100h1v1h-1zM647 106h1v1h-1zM655 100h1v1h-1zM655 106h1v1h-1zM663 100h1v1h-1zM663 106h1v1h-1zM671 100h1v1h-1zM671 106h1v1h-1zM679 100h1v1h-1zM679 106h1v1h-1zM687 100h1v1h-1zM687 106h1v1h-1zM695 100h1v1h-1zM695 106h1v1h-1zM703 100h1v1h-1zM703 106h1v1h-1zM711 100h1v1h-1zM711 106h1v1h-1zM719 100h1v1h-1zM719 106h1v1h-1zM727 100h1v1h-1zM727 106h1v1h-1zM735 100h1v1h-1zM735 106h1v1h-1zM743 100h1v1h-1zM743 106h1v1h-1zM751 100h1v1h-1zM751 106h1v1h-1zM759 100h1v1h-1zM759 106h1v1h-1zM767 100h1v1h-1zM767 106h1v1h-1zM775 100h1v1h-1zM775 106h1v1h-1zM783 100h1v1h-1zM783 106h1v1h-1zM791 100h1v1h-1zM791 106h1v1h-1zM799 100h1v1h-1zM799 106h1v1h-1zM807 100h1v1h-1zM807 106h1v1h-1zM815 100h1v1h-1zM815 106h1v1h-1zM823 100h1v1h-1zM823 106h1v1h-1zM831 100h1v1h-1zM831 106h1v1h-1zM839 100h1v1h-1zM839 106h1v1h-1zM847 100h1v1h-1zM847 106h1v1h-1zM855 100h1v1h-1zM855 106h1v1h-1zM863 100h1v1h-1zM863 106h1v1h-1zM871 100h1v1h-1zM871 106h1v1h-1zM879 100h1v1h-1zM879 106h1v1h-1zM887 100h1v1h-1zM887 106h1v1h-1zM895 100h1v1h-1zM895 106h1v1h-1zM903 100h1v1h-1zM903 106h1v1h-1zM911 100h1v1h-1zM911 106h1v1h-1zM919 100h1v1h-1zM919 106h1v1h-1zM927 100h1v1h-1zM927 106h1v1h-1zM935 100h1v1h-1zM935 106h1v1h-1zM943 100h1v1h-1zM943 106h1v1h-1z" fill="#0c0c78" opacity="0.55"/>
<text x="152" y="108" font-size="13" text-anchor="end" fill="#0c0c78" font-family="Liberation Sans, sans-serif"  shape-rendering="auto">GNA13</text>
<path d="M156 119.5H949" stroke="#0c0c78" stroke-width="1"/>
<path d="M156 119h1v1h-1zM157 118h1v1h-1zM157 120h1v1h-1zM158 117h1v1h-1zM158 121h1v1h-1zM164 119h1v1h-1zM165 118h1v1h-1zM165 120h1v1h-1zM166 117h1v1h-1zM166 121h1v1h-1zM172 119h1v1h-1zM173 118h1v1h-1zM173 120h1v1h-1zM174 117h1v1h-1zM174 121h1v1h-1zM180 119h1v1h-1zM181 118h1v1h-1zM181 120h1v1h-1zM182 117h1v1h-1zM182 121h1v1h-1zM188 119h1v1h-1zM189 118h1v1h-1zM189 120h1v1h-1zM190 117h1v1h-1zM190 121h1v1h-1zM196 119h1v1h-1zM197 118h1v1h-1zM197 120h1v1h-1zM198 117h1v1h-1zM198 121h1v1h-1zM204 119h1v1h-1zM205 118h1v1h-1zM205 120h1v1h-1zM206 117h1v1h-1zM206 121h1v1h-1zM212 119h1v1h-1zM213 118h1v1h-1zM213 120h1v1h-1zM214 117h1v1h-1zM214 121h1v1h-1zM220 119h1v1h-1zM221 118h1v1h-1zM221 120h1v1h-1zM222 117h1v1h-1zM222 121h1v1h-1zM228 119h1v1h-1zM229 118h1v1h-1zM229 120h1v1h-1zM230 117h1v1h-1zM230 121h1v1h-1zM236 119h1v1h-1zM237 118h1v1h-1zM237 120h1v1h-1zM238 117h1v1h-1zM238 121h1v1h-1zM244 119h1v1h-1zM245 118h1v1h-1zM245 120h1v1h-1zM246 117h1v1h-1zM246 121h1v1h-1zM252 119h1v1h-1zM253 118h1v1h-1zM253 120h1v1h-1zM254 117h1v1h-1zM254 121h1v1h-1zM260 119h1v1h-1zM261 118h1v1h-1zM261 120h1v1h-1zM262 117h1v1h-1zM262 121h1v1h-1zM268 119h1v1h-1zM269 118h1v1h-1zM269 120h1v1h-1zM270 117h1v1h-1zM270 121h1v1h-1zM276 119h1v1h-1zM277 118h1v1h-1zM277 120h1v1h-1zM278 117h1v1h-1zM278 121h1v1h-1zM284 119h1v1h-1zM285 118h1v1h-1zM285 120h1v1h-1zM286 117h1v1h-1zM286 121h1v1h-1zM292 119h1v1h-1zM293 118h1v1h-1zM293 120h1v1h-1zM294 117h1v1h-1zM294 121h1v1h-1zM300 119h1v1h-1zM301 118h1v1h-1zM301 120h1v1h-1zM302 117h1v1h-1zM302 121h1v1h-1zM308 119h1v1h-1zM309 118h1v1h-1zM309 120h1v1h-1zM310 117h1v1h-1zM310 121h1v1h-1zM316 119h1v1h-1zM317 118h1v1h-1zM317 120h1v1h-1zM318 117h1v1h-1zM318 121h1v1h-1zM324 119h1v1h-1zM325 118h1v1h-1zM325 120h1v1h-1zM326 117h1v1h-1zM326 121h1v1h-1zM332 119h1v1h-1zM333 118h1v1h-1zM333 120h1v1h-1zM334 117h1v1h-1zM334 121h1v1h-1zM340 119h1v1h-1zM341 118h1v1h-1zM341 120h1v1h-1zM342 117h1v1h-1zM342 121h1v1h-1zM348 119h1v1h-1zM349 118h1v1h-1zM349 120h1v1h-1zM350 117h1v1h-1zM350 121h1v1h-1zM356 119h1v1h-1zM357 118h1v1h-1zM357 120h1v1h-1zM358 117h1v1h-1zM358 121h1v1h-1zM364 119h1v1h-1zM365 118h1v1h-1zM365 120h1v1h-1zM366 117h1v1h-1zM366 121h1v1h-1zM372 119h1v1h-1zM373 118h1v1h-1zM373 120h1v1h-1zM374 117h1v1h-1zM374 121h1v1h-1zM380 119h1v1h-1zM381 118h1v1h-1zM381 120h1v1h-1zM382 117h1v1h-1zM382 121h1v1h-1zM388 119h1v1h-1zM389 118h1v1h-1zM389 120h1v1h-1zM390 117h1v1h-1zM390 121h1v1h-1zM396 119h1v1h-1zM397 118h1v1h-1zM397 120h1v1h-1zM398 117h1v1h-1zM398 121h1v1h-1zM404 119h1v1h-1zM405 118h1v1h-1zM405 120h1v1h-1zM406 117h1v1h-1zM406 121h1v1h-1zM412 119h1v1h-1zM413 118h1v1h-1zM413 120h1v1h-1zM414 117h1v1h-1zM414 121h1v1h-1zM420 119h1v1h-1zM421 118h1v1h-1zM421 120h1v1h-1zM422 117h1v1h-1zM422 121h1v1h-1zM428 119h1v1h-1zM429 118h1v1h-1zM429 120h1v1h-1zM430 117h1v1h-1zM430 121h1v1h-1zM436 119h1v1h-1zM437 118h1v1h-1zM437 120h1v1h-1zM438 117h1v1h-1zM438 121h1v1h-1zM444 119h1v1h-1zM445 118h1v1h-1zM445 120h1v1h-1zM446 117h1v1h-1zM446 121h1v1h-1zM452 119h1v1h-1zM453 118h1v1h-1zM453 120h1v1h-1zM454 117h1v1h-1zM454 121h1v1h-1zM460 119h1v1h-1zM461 118h1v1h-1zM461 120h1v1h-1zM462 117h1v1h-1zM462 121h1v1h-1zM468 119h1v1h-1zM469 118h1v1h-1zM469 120h1v1h-1zM470 117h1v1h-1zM470 121h1v1h-1zM476 119h1v1h-1zM477 118h1v1h-1zM477 120h1v1h-1zM478 117h1v1h-1zM478 121h1v1h-1zM484 119h1v1h-1zM485 118h1v1h-1zM485 120h1v1h-1zM486 117h1v1h-1zM486 121h1v1h-1zM492 119h1v1h-1zM493 118h1v1h-1zM493 120h1v1h-1zM494 117h1v1h-1zM494 121h1v1h-1zM500 119h1v1h-1zM501 118h1v1h-1zM501 120h1v1h-1zM502 117h1v1h-1zM502 121h1v1h-1zM508 119h1v1h-1zM509 118h1v1h-1zM509 120h1v1h-1zM510 117h1v1h-1zM510 121h1v1h-1zM516 119h1v1h-1zM517 118h1v1h-1zM517 120h1v1h-1zM518 117h1v1h-1zM518 121h1v1h-1zM524 119h1v1h-1zM525 118h1v1h-1zM525 120h1v1h-1zM526 117h1v1h-1zM526 121h1v1h-1zM532 119h1v1h-1zM533 118h1v1h-1zM533 120h1v1h-1zM534 117h1v1h-1zM534 121h1v1h-1zM540 119h1v1h-1zM541 118h1v1h-1zM541 120h1v1h-1zM542 117h1v1h-1zM542 121h1v1h-1zM548 119h1v1h-1zM549 118h1v1h-1zM549 120h1v1h-1zM550 117h1v1h-1zM550 121h1v1h-1zM556 119h1v1h-1zM557 118h1v1h-1zM557 120h1v1h-1zM558 117h1v1h-1zM558 121h1v1h-1zM564 119h1v1h-1zM565 118h1v1h-1zM565 120h1v1h-1zM566 117h1v1h-1zM566 121h1v1h-1zM572 119h1v1h-1zM573 118h1v1h-1zM573 120h1v1h-1zM574 117h1v1h-1zM574 121h1v1h-1zM580 119h1v1h-1zM581 118h1v1h-1zM581 120h1v1h-1zM582 117h1v1h-1zM582 121h1v1h-1zM588 119h1v1h-1zM589 118h1v1h-1zM589 120h1v1h-1zM590 117h1v1h-1zM590 121h1v1h-1zM596 119h1v1h-1zM597 118h1v1h-1zM597 120h1v1h-1zM598 117h1v1h-1zM598 121h1v1h-1zM604 119h1v1h-1zM605 118h1v1h-1zM605 120h1v1h-1zM606 117h1v1h-1zM606 121h1v1h-1zM612 119h1v1h-1zM613 118h1v1h-1zM613 120h1v1h-1zM614 117h1v1h-1zM614 121h1v1h-1zM620 119h1v1h-1zM621 118h1v1h-1zM621 120h1v1h-1zM622 117h1v1h-1zM622 121h1v1h-1zM628 119h1v1h-1zM629 118h1v1h-1zM629 120h1v1h-1zM630 117h1v1h-1zM630 121h1v1h-1zM636 119h1v1h-1zM637 118h1v1h-1zM637 120h1v1h-1zM638 117h1v1h-1zM638 121h1v1h-1zM644 119h1v1h-1zM645 118h1v1h-1zM645 120h1v1h-1zM646 117h1v1h-1zM646 121h1v1h-1zM652 119h1v1h-1zM653 118h1v1h-1zM653 120h1v1h-1zM654 117h1v1h-1zM654 121h1v1h-1zM660 119h1v1h-1zM661 118h1v1h-1zM661 120h1v1h-1zM662 117h1v1h-1zM662 121h1v1h-1zM668 119h1v1h-1zM669 118h1v1h-1zM669 120h1v1h-1zM670 117h1v1h-1zM670 121h1v1h-1zM676 119h1v1h-1zM677 118h1v1h-1zM677 120h1v1h-1zM678 117h1v1h-1zM678 121h1v1h-1zM684 119h1v1h-1zM685 118h1v1h-1zM685 120h1v1h-1zM686 117h1v1h-1zM686 121h1v1h-1zM692 119h1v1h-1zM693 118h1v1h-1zM693 120h1v1h-1zM694 117h1v1h-1zM694 121h1v1h-1zM700 119h1v1h-1zM701 118h1v1h-1zM701 120h1v1h-1zM702 117h1v1h-1zM702 121h1v1h-1zM708 119h1v1h-1zM709 118h1v1h-1zM709 120h1v1h-1zM710 117h1v1h-1zM710 121h1v1h-1zM716 119h1v1h-1zM717 118h1v1h-1zM717 120h1v1h-1zM718 117h1v1h-1zM718 121h1v1h-1zM724 119h1v1h-1zM725 118h1v1h-1zM725 120h1v1h-1zM726 117h1v1h-1zM726 121h1v1h-1zM732 119h1v1h-1zM733 118h1v1h-1zM733 120h1v1h-1zM734 117h1v1h-1zM734 121h1v1h-1zM740 119h1v1h-1zM741 118h1v1h-1zM741 120h1v1h-1zM742 117h1v1h-1zM742 121h1v1h-1zM748 119h1v1h-1zM749 118h1v1h-1zM749 120h1v1h-1zM750 117h1v1h-1zM750 121h1v1h-1zM756 119h1v1h-1zM757 118h1v1h-1zM757 120h1v1h-1zM758 117h1v1h-1zM758 121h1v1h-1zM764 119h1v1h-1zM765 118h1v1h-1zM765 120h1v1h-1zM766 117h1v1h-1zM766 121h1v1h-1zM772 119h1v1h-1zM773 118h1v1h-1zM773 120h1v1h-1zM774 117h1v1h-1zM774 121h1v1h-1zM780 119h1v1h-1zM781 118h1v1h-1zM781 120h1v1h-1zM782 117h1v1h-1zM782 121h1v1h-1zM788 119h1v1h-1zM789 118h1v1h-1zM789 120h1v1h-1zM790 117h1v1h-1zM790 121h1v1h-1zM796 119h1v1h-1zM797 118h1v1h-1zM797 120h1v1h-1zM798 117h1v1h-1zM798 121h1v1h-1zM804 119h1v1h-1zM805 118h1v1h-1zM805 120h1v1h-1zM806 117h1v1h-1zM806 121h1v1h-1zM812 119h1v1h-1zM813 118h1v1h-1zM813 120h1v1h-1zM814 117h1v1h-1zM814 121h1v1h-1zM820 119h1v1h-1zM821 118h1v1h-1zM821 120h1v1h-1zM822 117h1v1h-1zM822 121h1v1h-1zM828 119h1v1h-1zM829 118h1v1h-1zM829 120h1v1h-1zM830 117h1v1h-1zM830 121h1v1h-1zM836 119h1v1h-1zM837 118h1v1h-1zM837 120h1v1h-1zM838 117h1v1h-1zM838 121h1v1h-1zM844 119h1v1h-1zM845 118h1v1h-1zM845 120h1v1h-1zM846 117h1v1h-1zM846 121h1v1h-1zM852 119h1v1h-1zM853 118h1v1h-1zM853 120h1v1h-1zM854 117h1v1h-1zM854 121h1v1h-1zM860 119h1v1h-1zM861 118h1v1h-1zM861 120h1v1h-1zM862 117h1v1h-1zM862 121h1v1h-1zM868 119h1v1h-1zM869 118h1v1h-1zM869 120h1v1h-1zM870 117h1v1h-1zM870 121h1v1h-1zM876 119h1v1h-1zM877 118h1v1h-1zM877 120h1v1h-1zM878 117h1v1h-1zM878 121h1v1h-1zM884 119h1v1h-1zM885 118h1v1h-1zM885 120h1v1h-1zM886 117h1v1h-1zM886 121h1v1h-1zM892 119h1v1h-1zM893 118h1v1h-1zM893 120h1v1h-1zM894 117h1v1h-1zM894 121h1v1h-1zM900 119h1v1h-1zM901 118h1v1h-1zM901 120h1v1h-1zM902 117h1v1h-1zM902 121h1v1h-1zM908 119h1v1h-1zM909 118h1v1h-1zM909 120h1v1h-1zM910 117h1v1h-1zM910 121h1v1h-1zM916 119h1v1h-1zM917 118h1v1h-1zM917 120h1v1h-1zM918 117h1v1h-1zM918 121h1v1h-1zM924 119h1v1h-1zM925 118h1v1h-1zM925 120h1v1h-1zM926 117h1v1h-1zM926 121h1v1h-1zM932 119h1v1h-1zM933 118h1v1h-1zM933 120h1v1h-1zM934 117h1v1h-1zM934 121h1v1h-1zM940 119h1v1h-1zM941 118h1v1h-1zM941 120h1v1h-1zM942 117h1v1h-1zM942 121h1v1h-1z" fill="#0c0c78"/>
<path d="M159 116h1v1h-1zM159 122h1v1h-1zM167 116h1v1h-1zM167 122h1v1h-1zM175 116h1v1h-1zM175 122h1v1h-1zM183 116h1v1h-1zM183 122h1v1h-1zM191 116h1v1h-1zM191 122h1v1h-1zM199 116h1v1h-1zM199 122h1v1h-1zM207 116h1v1h-1zM207 122h1v1h-1zM215 116h1v1h-1zM215 122h1v1h-1zM223 116h1v1h-1zM223 122h1v1h-1zM231 116h1v1h-1zM231 122h1v1h-1zM239 116h1v1h-1zM239 122h1v1h-1zM247 116h1v1h-1zM247 122h1v1h-1zM255 116h1v1h-1zM255 122h1v1h-1zM263 116h1v1h-1zM263 122h1v1h-1zM271 116h1v1h-1zM271 122h1v1h-1zM279 116h1v1h-1zM279 122h1v1h-1zM287 116h1v1h-1zM287 122h1v1h-1zM295 116h1v1h-1zM295 122h1v1h-1zM303 116h1v1h-1zM303 122h1v1h-1zM311 116h1v1h-1zM311 122h1v1h-1zM319 116h1v1h-1zM319 122h1v1h-1zM327 116h1v1h-1zM327 122h1v1h-1zM335 116h1v1h-1zM335 122h1v1h-1zM343 116h1v1h-1zM343 122h1v1h-1zM351 116h1v1h-1zM351 122h1v1h-1zM359 116h1v1h-1zM359 122h1v1h-1zM367 116h1v1h-1zM367 122h1v1h-1zM375 116h1v1h-1zM375 122h1v1h-1zM383 116h1v1h-1zM383 122h1v1h-1zM391 116h1v1h-1zM391 122h1v1h-1zM399 116h1v1h-1zM399 122h1v1h-1zM407 116h1v1h-1zM407 122h1v1h-1zM415 116h1v1h-1zM415 122h1v1h-1zM423 116h1v1h-1zM423 122h1v1h-1zM431 116h1v1h-1zM431 122h1v1h-1zM439 116h1v1h-1zM439 122h1v1h-1zM447 116h1v1h-1zM447 122h1v1h-1zM455 116h1v1h-1zM455 122h1v1h-1zM463 116h1v1h-1zM463 122h1v1h-1zM471 116h1v1h-1zM471 122h1v1h-1zM479 116h1v1h-1zM479 122h1v1h-1zM487 116h1v1h-1zM487 122h1v1h-1zM495 116h1v1h-1zM495 122h1v1h-1zM503 116h1v1h-1zM503 122h1v1h-1zM511 116h1v1h-1zM511 122h1v1h-1zM519 116h1v1h-1zM519 122h1v1h-1zM527 116h1v1h-1zM527 122h1v1h-1zM535 116h1v1h-1zM535 122h1v1h-1zM543 116h1v1h-1zM543 122h1v1h-1zM551 116h1v1h-1zM551 122h1v1h-1zM559 116h1v1h-1zM559 122h1v1h-1zM567 116h1v1h-1zM567 122h1v1h-1zM575 116h1v1h-1zM575 122h1v1h-1zM583 116h1v1h-1zM583 122h1v1h-1zM591 116h1v1h-1zM591 122h1v1h-1zM599 116h1v1h-1zM599 122h1v1h-1zM607 116h1v1h-1zM607 122h1v1h-1zM615 116h1v1h-1zM615 122h1v1h-1zM623 116h1v1h-1zM623 122h1v1h-1zM631 116h1v1h-1zM631 122h1v1h-1zM639 116h1v1h-1zM639 122h1v1h-1zM647 116h1v1h-1zM647 122h1v1h-1zM655 116h1v1h-1zM655 122h1v1h-1zM663 116h1v1h-1zM663 122h1v1h-1zM671 116h1v1h-1zM671 122h1v1h-1zM679 116h1v1h-1zM679 122h1v1h-1zM687 116h1v1h-1zM687 122h1v1h-1zM695 116h1v1h-1zM695 122h1v1h-1zM703 116h1v1h-1zM703 122h1v1h-1zM711 116h1v1h-1zM711 122h1v1h-1zM719 116h1v1h-1zM719 122h1v1h-1zM727 116h1v1h-1zM727 122h1v1h-1zM735 116h1v1h-1zM735 122h1v1h-1zM743 116h1v1h-1zM743 122h1v1h-1zM751 116h1v1h-1zM751 122h1v1h-1zM759 116h1v1h-1zM759 122h1v1h-1zM767 116h1v1h-1zM767 122h1v1h-1zM775 116h1v1h-1zM775 122h1v1h-1zM783 116h1v1h-1zM783 122h1v1h-1zM791 116h1v1h-1zM791 122h1v1h-1zM799 116h1v1h-1zM799 122h1v1h-1zM807 116h1v1h-1zM807 122h1v1h-1zM815 116h1v1h-1zM815 122h1v1h-1zM823 116h1v1h-1zM823 122h1v1h-1zM831 116h1v1h-1zM831 122h1v1h-1zM839 116h1v1h-1zM839 122h1v1h-1zM847 116h1v1h-1zM847 122h1v1h-1zM855 116h1v1h-1zM855 122h1v1h-1zM863 116h1v1h-1zM863 122h1v1h-1zM871 116h1v1h-1zM871 122h1v1h-1zM879 116h1v1h-1zM879 122h1v1h-1zM887 116h1v1h-1zM887 122h1v1h-1zM895 116h1v1h-1zM895 122h1v1h-1zM903 116h1v1h-1zM903 122h1v1h-1zM911 116h1v1h-1zM911 122h1v1h-1zM919 116h1v1h-1zM919 122h1v1h-1zM927 116h1v1h-1zM927 122h1v1h-1zM935 116h1v1h-1zM935 122h1v1h-1zM943 116h1v1h-1zM943 122h1v1h-1z" fill="#0c0c78" opacity="0.55"/>
<text x="152" y="124" font-size="13" text-anchor="end" fill="#0c0c78" font-family="Liberation Sans, sans-serif"  shape-rendering="auto">GNA13</text>
<path d="M156 135.5H949" stroke="#0c0c78" stroke-width="1"/>
<path d="M156 135h1v1h-1zM157 134h1v1h-1zM157 136h1v1h-1zM158 133h1v1h-1zM158 137h1v1h-1zM164 135h1v1h-1zM165 134h1v1h-1zM165 136h1v1h-1zM166 133h1v1h-1zM166 137h1v1h-1zM172 135h1v1h-1zM173 134h1v1h-1zM173 136h1v1h-1zM174 133h1v1h-1zM174 137h1v1h-1zM180 135h1v1h-1zM181 134h1v1h-1zM181 136h1v1h-1zM182 133h1v1h-1zM182 137h1v1h-1zM188 135h1v1h-1zM189 134h1v1h-1zM189 136h1v1h-1zM190 133h1v1h-1zM190 137h1v1h-1zM196 135h1v1h-1zM197 134h1v1h-1zM197 136h1v1h-1zM198 133h1v1h-1zM198 137h1v1h-1zM204 135h1v1h-1zM205 134h1v1h-1zM205 136h1v1h-1zM206 133h1v1h-1zM206 137h1v1h-1zM212 135h1v1h-1zM213 134h1v1h-1zM213 136h1v1h-1zM214 133h1v1h-1zM214 137h1v1h-1zM220 135h1v1h-1zM221 134h1v1h-1zM221 136h1v1h-1zM222 133h1v1h-1zM222 137h1v1h-1zM228 135h1v1h-1zM229 134h1v1h-1zM229 136h1v1h-1zM230 133h1v1h-1zM230 137h1v1h-1zM236 135h1v1h-1zM237 134h1v1h-1zM237 136h1v1h-1zM238 133h1v1h-1zM238 137h1v1h-1zM244 135h1v1h-1zM245 134h1v1h-1zM245 136h1v1h-1zM246 133h1v1h-1zM246 137h1v1h-1zM252 135h1v1h-1zM253 134h1v1h-1zM253 136h1v1h-1zM254 133h1v1h-1zM254 137h1v1h-1zM260 135h1v1h-1zM261 134h1v1h-1zM261 136h1v1h-1zM262 133h1v1h-1zM262 137h1v1h-1zM268 135h1v1h-1zM269 134h1v1h-1zM269 136h1v1h-1zM270 133h1v1h-1zM270 137h1v1h-1zM276 135h1v1h-1zM277 134h1v1h-1zM277 136h1v1h-1zM278 133h1v1h-1zM278 137h1v1h-1zM284 135h1v1h-1zM285 134h1v1h-1zM285 136h1v1h-1zM286 133h1v1h-1zM286 137h1v1h-1zM292 135h1v1h-1zM293 134h1v1h-1zM293 136h1v1h-1zM294 133h1v1h-1zM294 137h1v1h-1zM300 135h1v1h-1zM301 134h1v1h-1zM301 136h1v1h-1zM302 133h1v1h-1zM302 137h1v1h-1zM308 135h1v1h-1zM309 134h1v1h-1zM309 136h1v1h-1zM310 133h1v1h-1zM310 137h1v1h-1zM316 135h1v1h-1zM317 134h1v1h-1zM317 136h1v1h-1zM318 133h1v1h-1zM318 137h1v1h-1zM324 135h1v1h-1zM325 134h1v1h-1zM325 136h1v1h-1zM326 133h1v1h-1zM326 137h1v1h-1zM332 135h1v1h-1zM333 134h1v1h-1zM333 136h1v1h-1zM334 133h1v1h-1zM334 137h1v1h-1zM340 135h1v1h-1zM341 134h1v1h-1zM341 136h1v1h-1zM342 133h1v1h-1zM342 137h1v1h-1zM348 135h1v1h-1zM349 134h1v1h-1zM349 136h1v1h-1zM350 133h1v1h-1zM350 137h1v1h-1zM356 135h1v1h-1zM357 134h1v1h-1zM357 136h1v1h-1zM358 133h1v1h-1zM358 137h1v1h-1zM364 135h1v1h-1zM365 134h1v1h-1zM365 136h1v1h-1zM366 133h1v1h-1zM366 137h1v1h-1zM372 135h1v1h-1zM373 134h1v1h-1zM373 136h1v1h-1zM374 133h1v1h-1zM374 137h1v1h-1zM380 135h1v1h-1zM381 134h1v1h-1zM381 136h1v1h-1zM382 133h1v1h-1zM382 137h1v1h-1zM388 135h1v1h-1zM389 134h1v1h-1zM389 136h1v1h-1zM390 133h1v1h-1zM390 137h1v1h-1zM396 135h1v1h-1zM397 134h1v1h-1zM397 136h1v1h-1zM398 133h1v1h-1zM398 137h1v1h-1zM404 135h1v1h-1zM405 134h1v1h-1zM405 136h1v1h-1zM406 133h1v1h-1zM406 137h1v1h-1zM412 135h1v1h-1zM413 134h1v1h-1zM413 136h1v1h-1zM414 133h1v1h-1zM414 137h1v1h-1zM420 135h1v1h-1zM421 134h1v1h-1zM421 136h1v1h-1zM422 133h1v1h-1zM422 137h1v1h-1zM428 135h1v1h-1zM429 134h1v1h-1zM429 136h1v1h-1zM430 133h1v1h-1zM430 137h1v1h-1zM436 135h1v1h-1zM437 134h1v1h-1zM437 136h1v1h-1zM438 133h1v1h-1zM438 137h1v1h-1zM444 135h1v1h-1zM445 134h1v1h-1zM445 136h1v1h-1zM446 133h1v1h-1zM446 137h1v1h-1zM452 135h1v1h-1zM453 134h1v1h-1zM453 136h1v1h-1zM454 133h1v1h-1zM454 137h1v1h-1zM460 135h1v1h-1zM461 134h1v1h-1zM461 136h1v1h-1zM462 133h1v1h-1zM462 137h1v1h-1zM468 135h1v1h-1zM469 134h1v1h-1zM469 136h1v1h-1zM470 133h1v1h-1zM470 137h1v1h-1zM476 135h1v1h-1zM477 134h1v1h-1zM477 136h1v1h-1zM478 133h1v1h-1zM478 137h1v1h-1zM484 135h1v1h-1zM485 134h1v1h-1zM485 136h1v1h-1zM486 133h1v1h-1zM486 137h1v1h-1zM492 135h1v1h-1zM493 134h1v1h-1zM493 136h1v1h-1zM494 133h1v1h-1zM494 137h1v1h-1zM500 135h1v1h-1zM501 134h1v1h-1zM501 136h1v1h-1zM502 133h1v1h-1zM502 137h1v1h-1zM508 135h1v1h-1zM509 134h1v1h-1zM509 136h1v1h-1zM510 133h1v1h-1zM510 137h1v1h-1zM516 135h1v1h-1zM517 134h1v1h-1zM517 136h1v1h-1zM518 133h1v1h-1zM518 137h1v1h-1zM524 135h1v1h-1zM525 134h1v1h-1zM525 136h1v1h-1zM526 133h1v1h-1zM526 137h1v1h-1zM532 135h1v1h-1zM533 134h1v1h-1zM533 136h1v1h-1zM534 133h1v1h-1zM534 137h1v1h-1zM540 135h1v1h-1zM541 134h1v1h-1zM541 136h1v1h-1zM542 133h1v1h-1zM542 137h1v1h-1zM548 135h1v1h-1zM549 134h1v1h-1zM549 136h1v1h-1zM550 133h1v1h-1zM550 137h1v1h-1zM556 135h1v1h-1zM557 134h1v1h-1zM557 136h1v1h-1zM558 133h1v1h-1zM558 137h1v1h-1zM564 135h1v1h-1zM565 134h1v1h-1zM565 136h1v1h-1zM566 133h1v1h-1zM566 137h1v1h-1zM572 135h1v1h-1zM573 134h1v1h-1zM573 136h1v1h-1zM574 133h1v1h-1zM574 137h1v1h-1zM580 135h1v1h-1zM581 134h1v1h-1zM581 136h1v1h-1zM582 133h1v1h-1zM582 137h1v1h-1zM588 135h1v1h-1zM589 134h1v1h-1zM589 136h1v1h-1zM590 133h1v1h-1zM590 137h1v1h-1zM596 135h1v1h-1zM597 134h1v1h-1zM597 136h1v1h-1zM598 133h1v1h-1zM598 137h1v1h-1zM604 135h1v1h-1zM605 134h1v1h-1zM605 136h1v1h-1zM606 133h1v1h-1zM606 137h1v1h-1zM612 135h1v1h-1zM613 134h1v1h-1zM613 136h1v1h-1zM614 133h1v1h-1zM614 137h1v1h-1zM620 135h1v1h-1zM621 134h1v1h-1zM621 136h1v1h-1zM622 133h1v1h-1zM622 137h1v1h-1zM628 135h1v1h-1zM629 134h1v1h-1zM629 136h1v1h-1zM630 133h1v1h-1zM630 137h1v1h-1zM636 135h1v1h-1zM637 134h1v1h-1zM637 136h1v1h-1zM638 133h1v1h-1zM638 137h1v1h-1zM644 135h1v1h-1zM645 134h1v1h-1zM645 136h1v1h-1zM646 133h1v1h-1zM646 137h1v1h-1zM652 135h1v1h-1zM653 134h1v1h-1zM653 136h1v1h-1zM654 133h1v1h-1zM654 137h1v1h-1zM660 135h1v1h-1zM661 134h1v1h-1zM661 136h1v1h-1zM662 133h1v1h-1zM662 137h1v1h-1zM668 135h1v1h-1zM669 134h1v1h-1zM669 136h1v1h-1zM670 133h1v1h-1zM670 137h1v1h-1zM676 135h1v1h-1zM677 134h1v1h-1zM677 136h1v1h-1zM678 133h1v1h-1zM678 137h1v1h-1zM684 135h1v1h-1zM685 134h1v1h-1zM685 136h1v1h-1zM686 133h1v1h-1zM686 137h1v1h-1zM692 135h1v1h-1zM693 134h1v1h-1zM693 136h1v1h-1zM694 133h1v1h-1zM694 137h1v1h-1zM700 135h1v1h-1zM701 134h1v1h-1zM701 136h1v1h-1zM702 133h1v1h-1zM702 137h1v1h-1zM708 135h1v1h-1zM709 134h1v1h-1zM709 136h1v1h-1zM710 133h1v1h-1zM710 137h1v1h-1zM716 135h1v1h-1zM717 134h1v1h-1zM717 136h1v1h-1zM718 133h1v1h-1zM718 137h1v1h-1zM724 135h1v1h-1zM725 134h1v1h-1zM725 136h1v1h-1zM726 133h1v1h-1zM726 137h1v1h-1zM732 135h1v1h-1zM733 134h1v1h-1zM733 136h1v1h-1zM734 133h1v1h-1zM734 137h1v1h-1zM740 135h1v1h-1zM741 134h1v1h-1zM741 136h1v1h-1zM742 133h1v1h-1zM742 137h1v1h-1zM748 135h1v1h-1zM749 134h1v1h-1zM749 136h1v1h-1zM750 133h1v1h-1zM750 137h1v1h-1zM756 135h1v1h-1zM757 134h1v1h-1zM757 136h1v1h-1zM758 133h1v1h-1zM758 137h1v1h-1zM764 135h1v1h-1zM765 134h1v1h-1zM765 136h1v1h-1zM766 133h1v1h-1zM766 137h1v1h-1zM772 135h1v1h-1zM773 134h1v1h-1zM773 136h1v1h-1zM774 133h1v1h-1zM774 137h1v1h-1zM780 135h1v1h-1zM781 134h1v1h-1zM781 136h1v1h-1zM782 133h1v1h-1zM782 137h1v1h-1zM788 135h1v1h-1zM789 134h1v1h-1zM789 136h1v1h-1zM790 133h1v1h-1zM790 137h1v1h-1zM796 135h1v1h-1zM797 134h1v1h-1zM797 136h1v1h-1zM798 133h1v1h-1zM798 137h1v1h-1zM804 135h1v1h-1zM805 134h1v1h-1zM805 136h1v1h-1zM806 133h1v1h-1zM806 137h1v1h-1zM812 135h1v1h-1zM813 134h1v1h-1zM813 136h1v1h-1zM814 133h1v1h-1zM814 137h1v1h-1zM820 135h1v1h-1zM821 134h1v1h-1zM821 136h1v1h-1zM822 133h1v1h-1zM822 137h1v1h-1zM828 135h1v1h-1zM829 134h1v1h-1zM829 136h1v1h-1zM830 133h1v1h-1zM830 137h1v1h-1zM836 135h1v1h-1zM837 134h1v1h-1zM837 136h1v1h-1zM838 133h1v1h-1zM838 137h1v1h-1zM844 135h1v1h-1zM845 134h1v1h-1zM845 136h1v1h-1zM846 133h1v1h-1zM846 137h1v1h-1zM852 135h1v1h-1zM853 134h1v1h-1zM853 136h1v1h-1zM854 133h1v1h-1zM854 137h1v1h-1zM860 135h1v1h-1zM861 134h1v1h-1zM861 136h1v1h-1zM862 133h1v1h-1zM862 137h1v1h-1zM868 135h1v1h-1zM869 134h1v1h-1zM869 136h1v1h-1zM870 133h1v1h-1zM870 137h1v1h-1zM876 135h1v1h-1zM877 134h1v1h-1zM877 136h1v1h-1zM878 133h1v1h-1zM878 137h1v1h-1zM884 135h1v1h-1zM885 134h1v1h-1zM885 136h1v1h-1zM886 133h1v1h-1zM886 137h1v1h-1zM892 135h1v1h-1zM893 134h1v1h-1zM893 136h1v1h-1zM894 133h1v1h-1zM894 137h1v1h-1zM900 135h1v1h-1zM901 134h1v1h-1zM901 136h1v1h-1zM902 133h1v1h-1zM902 137h1v1h-1zM908 135h1v1h-1zM909 134h1v1h-1zM909 136h1v1h-1zM910 133h1v1h-1zM910 137h1v1h-1zM916 135h1v1h-1zM917 134h1v1h-1zM917 136h1v1h-1zM918 133h1v1h-1zM918 137h1v1h-1zM924 135h1v1h-1zM925 134h1v1h-1zM925 136h1v1h-1zM926 133h1v1h-1zM926 137h1v1h-1zM932 135h1v1h-1zM933 134h1v1h-1zM933 136h1v1h-1zM934 133h1v1h-1zM934 137h1v1h-1zM940 135h1v1h-1zM941 134h1v1h-1zM941 136h1v1h-1zM942 133h1v1h-1zM942 137h1v1h-1z" fill="#0c0c78"/>
<path d="M159 132h1v1h-1zM159 138h1v1h-1zM167 132h1v1h-1zM167 138h1v1h-1zM175 132h1v1h-1zM175 138h1v1h-1zM183 132h1v1h-1zM183 138h1v1h-1zM191 132h1v1h-1zM191 138h1v1h-1zM199 132h1v1h-1zM199 138h1v1h-1zM207 132h1v1h-1zM207 138h1v1h-1zM215 132h1v1h-1zM215 138h1v1h-1zM223 132h1v1h-1zM223 138h1v1h-1zM231 132h1v1h-1zM231 138h1v1h-1zM239 132h1v1h-1zM239 138h1v1h-1zM247 132h1v1h-1zM247 138h1v1h-1zM255 132h1v1h-1zM255 138h1v1h-1zM263 132h1v1h-1zM263 138h1v1h-1zM271 132h1v1h-1zM271 138h1v1h-1zM279 132h1v1h-1zM279 138h1v1h-1zM287 132h1v1h-1zM287 138h1v1h-1zM295 132h1v1h-1zM295 138h1v1h-1zM303 132h1v1h-1zM303 138h1v1h-1zM311 132h1v1h-1zM311 138h1v1h-1zM319 132h1v1h-1zM319 138h1v1h-1zM327 132h1v1h-1zM327 138h1v1h-1zM335 132h1v1h-1zM335 138h1v1h-1zM343 132h1v1h-1zM343 138h1v1h-1zM351 132h1v1h-1zM351 138h1v1h-1zM359 132h1v1h-1zM359 138h1v1h-1zM367 132h1v1h-1zM367 138h1v1h-1zM375 132h1v1h-1zM375 138h1v1h-1zM383 132h1v1h-1zM383 138h1v1h-1zM391 132h1v1h-1zM391 138h1v1h-1zM399 132h1v1h-1zM399 138h1v1h-1zM407 132h1v1h-1zM407 138h1v1h-1zM415 132h1v1h-1zM415 138h1v1h-1zM423 132h1v1h-1zM423 138h1v1h-1zM431 132h1v1h-1zM431 138h1v1h-1zM439 132h1v1h-1zM439 138h1v1h-1zM447 132h1v1h-1zM447 138h1v1h-1zM455 132h1v1h-1zM455 138h1v1h-1zM463 132h1v1h-1zM463 138h1v1h-1zM471 132h1v1h-1zM471 138h1v1h-1zM479 132h1v1h-1zM479 138h1v1h-1zM487 132h1v1h-1zM487 138h1v1h-1zM495 132h1v1h-1zM495 138h1v1h-1zM503 132h1v1h-1zM503 138h1v1h-1zM511 132h1v1h-1zM511 138h1v1h-1zM519 132h1v1h-1zM519 138h1v1h-1zM527 132h1v1h-1zM527 138h1v1h-1zM535 132h1v1h-1zM535 138h1v1h-1zM543 132h1v1h-1zM543 138h1v1h-1zM551 132h1v1h-1zM551 138h1v1h-1zM559 132h1v1h-1zM559 138h1v1h-1zM567 132h1v1h-1zM567 138h1v1h-1zM575 132h1v1h-1zM575 138h1v1h-1zM583 132h1v1h-1zM583 138h1v1h-1zM591 132h1v1h-1zM591 138h1v1h-1zM599 132h1v1h-1zM599 138h1v1h-1zM607 132h1v1h-1zM607 138h1v1h-1zM615 132h1v1h-1zM615 138h1v1h-1zM623 132h1v1h-1zM623 138h1v1h-1zM631 132h1v1h-1zM631 138h1v1h-1zM639 132h1v1h-1zM639 138h1v1h-1zM647 132h1v1h-1zM647 138h1v1h-1zM655 132h1v1h-1zM655 138h1v1h-1zM663 132h1v1h-1zM663 138h1v1h-1zM671 132h1v1h-1zM671 138h1v1h-1zM679 132h1v1h-1zM679 138h1v1h-1zM687 132h1v1h-1zM687 138h1v1h-1zM695 132h1v1h-1zM695 138h1v1h-1zM703 132h1v1h-1zM703 138h1v1h-1zM711 132h1v1h-1zM711 138h1v1h-1zM719 132h1v1h-1zM719 138h1v1h-1zM727 132h1v1h-1zM727 138h1v1h-1zM735 132h1v1h-1zM735 138h1v1h-1zM743 132h1v1h-1zM743 138h1v1h-1zM751 132h1v1h-1zM751 138h1v1h-1zM759 132h1v1h-1zM759 138h1v1h-1zM767 132h1v1h-1zM767 138h1v1h-1zM775 132h1v1h-1zM775 138h1v1h-1zM783 132h1v1h-1zM783 138h1v1h-1zM791 132h1v1h-1zM791 138h1v1h-1zM799 132h1v1h-1zM799 138h1v1h-1zM807 132h1v1h-1zM807 138h1v1h-1zM815 132h1v1h-1zM815 138h1v1h-1zM823 132h1v1h-1zM823 138h1v1h-1zM831 132h1v1h-1zM831 138h1v1h-1zM839 132h1v1h-1zM839 138h1v1h-1zM847 132h1v1h-1zM847 138h1v1h-1zM855 132h1v1h-1zM855 138h1v1h-1zM863 132h1v1h-1zM863 138h1v1h-1zM871 132h1v1h-1zM871 138h1v1h-1zM879 132h1v1h-1zM879 138h1v1h-1zM887 132h1v1h-1zM887 138h1v1h-1zM895 132h1v1h-1zM895 138h1v1h-1zM903 132h1v1h-1zM903 138h1v1h-1zM911 132h1v1h-1zM911 138h1v1h-1zM919 132h1v1h-1zM919 138h1v1h-1zM927 132h1v1h-1zM927 138h1v1h-1zM935 132h1v1h-1zM935 138h1v1h-1zM943 132h1v1h-1zM943 138h1v1h-1z" fill="#0c0c78" opacity="0.55"/>
<text x="152" y="140" font-size="13" text-anchor="end" fill="#0c0c78" font-family="Liberation Sans, sans-serif"  shape-rendering="auto">GNA13</text>
<path d="M156 151.5H949" stroke="#1a78b4" stroke-width="1"/>
<path d="M156 151h1v1h-1zM157 150h1v1h-1zM157 152h1v1h-1zM158 149h1v1h-1zM158 153h1v1h-1zM164 151h1v1h-1zM165 150h1v1h-1zM165 152h1v1h-1zM166 149h1v1h-1zM166 153h1v1h-1zM172 151h1v1h-1zM173 150h1v1h-1zM173 152h1v1h-1zM174 149h1v1h-1zM174 153h1v1h-1zM180 151h1v1h-1zM181 150h1v1h-1zM181 152h1v1h-1zM182 149h1v1h-1zM182 153h1v1h-1zM188 151h1v1h-1zM189 150h1v1h-1zM189 152h1v1h-1zM190 149h1v1h-1zM190 153h1v1h-1zM196 151h1v1h-1zM197 150h1v1h-1zM197 152h1v1h-1zM198 149h1v1h-1zM198 153h1v1h-1zM204 151h1v1h-1zM205 150h1v1h-1zM205 152h1v1h-1zM206 149h1v1h-1zM206 153h1v1h-1zM212 151h1v1h-1zM213 150h1v1h-1zM213 152h1v1h-1zM214 149h1v1h-1zM214 153h1v1h-1zM220 151h1v1h-1zM221 150h1v1h-1zM221 152h1v1h-1zM222 149h1v1h-1zM222 153h1v1h-1zM228 151h1v1h-1zM229 150h1v1h-1zM229 152h1v1h-1zM230 149h1v1h-1zM230 153h1v1h-1zM236 151h1v1h-1zM237 150h1v1h-1zM237 152h1v1h-1zM238 149h1v1h-1zM238 153h1v1h-1zM244 151h1v1h-1zM245 150h1v1h-1zM245 152h1v1h-1zM246 149h1v1h-1zM246 153h1v1h-1zM252 151h1v1h-1zM253 150h1v1h-1zM253 152h1v1h-1zM254 149h1v1h-1zM254 153h1v1h-1zM260 151h1v1h-1zM261 150h1v1h-1zM261 152h1v1h-1zM262 149h1v1h-1zM262 153h1v1h-1zM268 151h1v1h-1zM269 150h1v1h-1zM269 152h1v1h-1zM270 149h1v1h-1zM270 153h1v1h-1zM276 151h1v1h-1zM277 150h1v1h-1zM277 152h1v1h-1zM278 149h1v1h-1zM278 153h1v1h-1zM284 151h1v1h-1zM285 150h1v1h-1zM285 152h1v1h-1zM286 149h1v1h-1zM286 153h1v1h-1zM292 151h1v1h-1zM293 150h1v1h-1zM293 152h1v1h-1zM294 149h1v1h-1zM294 153h1v1h-1zM300 151h1v1h-1zM301 150h1v1h-1zM301 152h1v1h-1zM302 149h1v1h-1zM302 153h1v1h-1zM308 151h1v1h-1zM309 150h1v1h-1zM309 152h1v1h-1zM310 149h1v1h-1zM310 153h1v1h-1zM316 151h1v1h-1zM317 150h1v1h-1zM317 152h1v1h-1zM318 149h1v1h-1zM318 153h1v1h-1zM324 151h1v1h-1zM325 150h1v1h-1zM325 152h1v1h-1zM326 149h1v1h-1zM326 153h1v1h-1zM332 151h1v1h-1zM333 150h1v1h-1zM333 152h1v1h-1zM334 149h1v1h-1zM334 153h1v1h-1zM340 151h1v1h-1zM341 150h1v1h-1zM341 152h1v1h-1zM342 149h1v1h-1zM342 153h1v1h-1zM348 151h1v1h-1zM349 150h1v1h-1zM349 152h1v1h-1zM350 149h1v1h-1zM350 153h1v1h-1zM356 151h1v1h-1zM357 150h1v1h-1zM357 152h1v1h-1zM358 149h1v1h-1zM358 153h1v1h-1zM364 151h1v1h-1zM365 150h1v1h-1zM365 152h1v1h-1zM366 149h1v1h-1zM366 153h1v1h-1zM372 151h1v1h-1zM373 150h1v1h-1zM373 152h1v1h-1zM374 149h1v1h-1zM374 153h1v1h-1zM380 151h1v1h-1zM381 150h1v1h-1zM381 152h1v1h-1zM382 149h1v1h-1zM382 153h1v1h-1zM388 151h1v1h-1zM389 150h1v1h-1zM389 152h1v1h-1zM390 149h1v1h-1zM390 153h1v1h-1zM396 151h1v1h-1zM397 150h1v1h-1zM397 152h1v1h-1zM398 149h1v1h-1zM398 153h1v1h-1zM404 151h1v1h-1zM405 150h1v1h-1zM405 152h1v1h-1zM406 149h1v1h-1zM406 153h1v1h-1zM412 151h1v1h-1zM413 150h1v1h-1zM413 152h1v1h-1zM414 149h1v1h-1zM414 153h1v1h-1zM420 151h1v1h-1zM421 150h1v1h-1zM421 152h1v1h-1zM422 149h1v1h-1zM422 153h1v1h-1zM428 151h1v1h-1zM429 150h1v1h-1zM429 152h1v1h-1zM430 149h1v1h-1zM430 153h1v1h-1zM436 151h1v1h-1zM437 150h1v1h-1zM437 152h1v1h-1zM438 149h1v1h-1zM438 153h1v1h-1zM444 151h1v1h-1zM445 150h1v1h-1zM445 152h1v1h-1zM446 149h1v1h-1zM446 153h1v1h-1zM452 151h1v1h-1zM453 150h1v1h-1zM453 152h1v1h-1zM454 149h1v1h-1zM454 153h1v1h-1zM460 151h1v1h-1zM461 150h1v1h-1zM461 152h1v1h-1zM462 149h1v1h-1zM462 153h1v1h-1zM468 151h1v1h-1zM469 150h1v1h-1zM469 152h1v1h-1zM470 149h1v1h-1zM470 153h1v1h-1zM476 151h1v1h-1zM477 150h1v1h-1zM477 152h1v1h-1zM478 149h1v1h-1zM478 153h1v1h-1zM484 151h1v1h-1zM485 150h1v1h-1zM485 152h1v1h-1zM486 149h1v1h-1zM486 153h1v1h-1zM492 151h1v1h-1zM493 150h1v1h-1zM493 152h1v1h-1zM494 149h1v1h-1zM494 153h1v1h-1zM500 151h1v1h-1zM501 150h1v1h-1zM501 152h1v1h-1zM502 149h1v1h-1zM502 153h1v1h-1zM508 151h1v1h-1zM509 150h1v1h-1zM509 152h1v1h-1zM510 149h1v1h-1zM510 153h1v1h-1zM516 151h1v1h-1zM517 150h1v1h-1zM517 152h1v1h-1zM518 149h1v1h-1zM518 153h1v1h-1zM524 151h1v1h-1zM525 150h1v1h-1zM525 152h1v1h-1zM526 149h1v1h-1zM526 153h1v1h-1zM532 151h1v1h-1zM533 150h1v1h-1zM533 152h1v1h-1zM534 149h1v1h-1zM534 153h1v1h-1zM540 151h1v1h-1zM541 150h1v1h-1zM541 152h1v1h-1zM542 149h1v1h-1zM542 153h1v1h-1zM548 151h1v1h-1zM549 150h1v1h-1zM549 152h1v1h-1zM550 149h1v1h-1zM550 153h1v1h-1zM556 151h1v1h-1zM557 150h1v1h-1zM557 152h1v1h-1zM558 149h1v1h-1zM558 153h1v1h-1zM564 151h1v1h-1zM565 150h1v1h-1zM565 152h1v1h-1zM566 149h1v1h-1zM566 153h1v1h-1zM572 151h1v1h-1zM573 150h1v1h-1zM573 152h1v1h-1zM574 149h1v1h-1zM574 153h1v1h-1zM580 151h1v1h-1zM581 150h1v1h-1zM581 152h1v1h-1zM582 149h1v1h-1zM582 153h1v1h-1zM588 151h1v1h-1zM589 150h1v1h-1zM589 152h1v1h-1zM590 149h1v1h-1zM590 153h1v1h-1zM596 151h1v1h-1zM597 150h1v1h-1zM597 152h1v1h-1zM598 149h1v1h-1zM598 153h1v1h-1zM604 151h1v1h-1zM605 150h1v1h-1zM605 152h1v1h-1zM606 149h1v1h-1zM606 153h1v1h-1zM612 151h1v1h-1zM613 150h1v1h-1zM613 152h1v1h-1zM614 149h1v1h-1zM614 153h1v1h-1zM620 151h1v1h-1zM621 150h1v1h-1zM621 152h1v1h-1zM622 149h1v1h-1zM622 153h1v1h-1zM628 151h1v1h-1zM629 150h1v1h-1zM629 152h1v1h-1zM630 149h1v1h-1zM630 153h1v1h-1zM636 151h1v1h-1zM637 150h1v1h-1zM637 152h1v1h-1zM638 149h1v1h-1zM638 153h1v1h-1zM644 151h1v1h-1zM645 150h1v1h-1zM645 152h1v1h-1zM646 149h1v1h-1zM646 153h1v1h-1zM652 151h1v1h-1zM653 150h1v1h-1zM653 152h1v1h-1zM654 149h1v1h-1zM654 153h1v1h-1zM660 151h1v1h-1zM661 150h1v1h-1zM661 152h1v1h-1zM662 149h1v1h-1zM662 153h1v1h-1zM668 151h1v1h-1zM669 150h1v1h-1zM669 152h1v1h-1zM670 149h1v1h-1zM670 153h1v1h-1zM676 151h1v1h-1zM677 150h1v1h-1zM677 152h1v1h-1zM678 149h1v1h-1zM678 153h1v1h-1zM684 151h1v1h-1zM685 150h1v1h-1zM685 152h1v1h-1zM686 149h1v1h-1zM686 153h1v1h-1zM692 151h1v1h-1zM693 150h1v1h-1zM693 152h1v1h-1zM694 149h1v1h-1zM694 153h1v1h-1zM700 151h1v1h-1zM701 150h1v1h-1zM701 152h1v1h-1zM702 149h1v1h-1zM702 153h1v1h-1zM708 151h1v1h-1zM709 150h1v1h-1zM709 152h1v1h-1zM710 149h1v1h-1zM710 153h1v1h-1zM716 151h1v1h-1zM717 150h1v1h-1zM717 152h1v1h-1zM718 149h1v1h-1zM718 153h1v1h-1zM724 151h1v1h-1zM725 150h1v1h-1zM725 152h1v1h-1zM726 149h1v1h-1zM726 153h1v1h-1zM732 151h1v1h-1zM733 150h1v1h-1zM733 152h1v1h-1zM734 149h1v1h-1zM734 153h1v1h-1zM740 151h1v1h-1zM741 150h1v1h-1zM741 152h1v1h-1zM742 149h1v1h-1zM742 153h1v1h-1zM748 151h1v1h-1zM749 150h1v1h-1zM749 152h1v1h-1zM750 149h1v1h-1zM750 153h1v1h-1zM756 151h1v1h-1zM757 150h1v1h-1zM757 152h1v1h-1zM758 149h1v1h-1zM758 153h1v1h-1zM764 151h1v1h-1zM765 150h1v1h-1zM765 152h1v1h-1zM766 149h1v1h-1zM766 153h1v1h-1zM772 151h1v1h-1zM773 150h1v1h-1zM773 152h1v1h-1zM774 149h1v1h-1zM774 153h1v1h-1zM780 151h1v1h-1zM781 150h1v1h-1zM781 152h1v1h-1zM782 149h1v1h-1zM782 153h1v1h-1zM788 151h1v1h-1zM789 150h1v1h-1zM789 152h1v1h-1zM790 149h1v1h-1zM790 153h1v1h-1zM796 151h1v1h-1zM797 150h1v1h-1zM797 152h1v1h-1zM798 149h1v1h-1zM798 153h1v1h-1zM804 151h1v1h-1zM805 150h1v1h-1zM805 152h1v1h-1zM806 149h1v1h-1zM806 153h1v1h-1zM812 151h1v1h-1zM813 150h1v1h-1zM813 152h1v1h-1zM814 149h1v1h-1zM814 153h1v1h-1zM820 151h1v1h-1zM821 150h1v1h-1zM821 152h1v1h-1zM822 149h1v1h-1zM822 153h1v1h-1zM828 151h1v1h-1zM829 150h1v1h-1zM829 152h1v1h-1zM830 149h1v1h-1zM830 153h1v1h-1zM836 151h1v1h-1zM837 150h1v1h-1zM837 152h1v1h-1zM838 149h1v1h-1zM838 153h1v1h-1zM844 151h1v1h-1zM845 150h1v1h-1zM845 152h1v1h-1zM846 149h1v1h-1zM846 153h1v1h-1zM852 151h1v1h-1zM853 150h1v1h-1zM853 152h1v1h-1zM854 149h1v1h-1zM854 153h1v1h-1zM860 151h1v1h-1zM861 150h1v1h-1zM861 152h1v1h-1zM862 149h1v1h-1zM862 153h1v1h-1zM868 151h1v1h-1zM869 150h1v1h-1zM869 152h1v1h-1zM870 149h1v1h-1zM870 153h1v1h-1zM876 151h1v1h-1zM877 150h1v1h-1zM877 152h1v1h-1zM878 149h1v1h-1zM878 153h1v1h-1zM884 151h1v1h-1zM885 150h1v1h-1zM885 152h1v1h-1zM886 149h1v1h-1zM886 153h1v1h-1zM892 151h1v1h-1zM893 150h1v1h-1zM893 152h1v1h-1zM894 149h1v1h-1zM894 153h1v1h-1zM900 151h1v1h-1zM901 150h1v1h-1zM901 152h1v1h-1zM902 149h1v1h-1zM902 153h1v1h-1zM908 151h1v1h-1zM909 150h1v1h-1zM909 152h1v1h-1zM910 149h1v1h-1zM910 153h1v1h-1zM916 151h1v1h-1zM917 150h1v1h-1zM917 152h1v1h-1zM918 149h1v1h-1zM918 153h1v1h-1zM924 151h1v1h-1zM925 150h1v1h-1zM925 152h1v1h-1zM926 149h1v1h-1zM926 153h1v1h-1zM932 151h1v1h-1zM933 150h1v1h-1zM933 152h1v1h-1zM934 149h1v1h-1zM934 153h1v1h-1zM940 151h1v1h-1zM941 150h1v1h-1zM941 152h1v1h-1zM942 149h1v1h-1zM942 153h1v1h-1z" fill="#1a78b4"/>
<path d="M159 148h1v1h-1zM159 154h1v1h-1zM167 148h1v1h-1zM167 154h1v1h-1zM175 148h1v1h-1zM175 154h1v1h-1zM183 148h1v1h-1zM183 154h1v1h-1zM191 148h1v1h-1zM191 154h1v1h-1zM199 148h1v1h-1zM199 154h1v1h-1zM207 148h1v1h-1zM207 154h1v1h-1zM215 148h1v1h-1zM215 154h1v1h-1zM223 148h1v1h-1zM223 154h1v1h-1zM231 148h1v1h-1zM231 154h1v1h-1zM239 148h1v1h-1zM239 154h1v1h-1zM247 148h1v1h-1zM247 154h1v1h-1zM255 148h1v1h-1zM255 154h1v1h-1zM263 148h1v1h-1zM263 154h1v1h-1zM271 148h1v1h-1zM271 154h1v1h-1zM279 148h1v1h-1zM279 154h1v1h-1zM287 148h1v1h-1zM287 154h1v1h-1zM295 148h1v1h-1zM295 154h1v1h-1zM303 148h1v1h-1zM303 154h1v1h-1zM311 148h1v1h-1zM311 154h1v1h-1zM319 148h1v1h-1zM319 154h1v1h-1zM327 148h1v1h-1zM327 154h1v1h-1zM335 148h1v1h-1zM335 154h1v1h-1zM343 148h1v1h-1zM343 154h1v1h-1zM351 148h1v1h-1zM351 154h1v1h-1zM359 148h1v1h-1zM359 154h1v1h-1zM367 148h1v1h-1zM367 154h1v1h-1zM375 148h1v1h-1zM375 154h1v1h-1zM383 148h1v1h-1zM383 154h1v1h-1zM391 148h1v1h-1zM391 154h1v1h-1zM399 148h1v1h-1zM399 154h1v1h-1zM407 148h1v1h-1zM407 154h1v1h-1zM415 148h1v1h-1zM415 154h1v1h-1zM423 148h1v1h-1zM423 154h1v1h-1zM431 148h1v1h-1zM431 154h1v1h-1zM439 148h1v1h-1zM439 154h1v1h-1zM447 148h1v1h-1zM447 154h1v1h-1zM455 148h1v1h-1zM455 154h1v1h-1zM463 148h1v1h-1zM463 154h1v1h-1zM471 148h1v1h-1zM471 154h1v1h-1zM479 148h1v1h-1zM479 154h1v1h-1zM487 148h1v1h-1zM487 154h1v1h-1zM495 148h1v1h-1zM495 154h1v1h-1zM503 148h1v1h-1zM503 154h1v1h-1zM511 148h1v1h-1zM511 154h1v1h-1zM519 148h1v1h-1zM519 154h1v1h-1zM527 148h1v1h-1zM527 154h1v1h-1zM535 148h1v1h-1zM535 154h1v1h-1zM543 148h1v1h-1zM543 154h1v1h-1zM551 148h1v1h-1zM551 154h1v1h-1zM559 148h1v1h-1zM559 154h1v1h-1zM567 148h1v1h-1zM567 154h1v1h-1zM575 148h1v1h-1zM575 154h1v1h-1zM583 148h1v1h-1zM583 154h1v1h-1zM591 148h1v1h-1zM591 154h1v1h-1zM599 148h1v1h-1zM599 154h1v1h-1zM607 148h1v1h-1zM607 154h1v1h-1zM615 148h1v1h-1zM615 154h1v1h-1zM623 148h1v1h-1zM623 154h1v1h-1zM631 148h1v1h-1zM631 154h1v1h-1zM639 148h1v1h-1zM639 154h1v1h-1zM647 148h1v1h-1zM647 154h1v1h-1zM655 148h1v1h-1zM655 154h1v1h-1zM663 148h1v1h-1zM663 154h1v1h-1zM671 148h1v1h-1zM671 154h1v1h-1zM679 148h1v1h-1zM679 154h1v1h-1zM687 148h1v1h-1zM687 154h1v1h-1zM695 148h1v1h-1zM695 154h1v1h-1zM703 148h1v1h-1zM703 154h1v1h-1zM711 148h1v1h-1zM711 154h1v1h-1zM719 148h1v1h-1zM719 154h1v1h-1zM727 148h1v1h-1zM727 154h1v1h-1zM735 148h1v1h-1zM735 154h1v1h-1zM743 148h1v1h-1zM743 154h1v1h-1zM751 148h1v1h-1zM751 154h1v1h-1zM759 148h1v1h-1zM759 154h1v1h-1zM767 148h1v1h-1zM767 154h1v1h-1zM775 148h1v1h-1zM775 154h1v1h-1zM783 148h1v1h-1zM783 154h1v1h-1zM791 148h1v1h-1zM791 154h1v1h-1zM799 148h1v1h-1zM799 154h1v1h-1zM807 148h1v1h-1zM807 154h1v1h-1zM815 148h1v1h-1zM815 154h1v1h-1zM823 148h1v1h-1zM823 154h1v1h-1zM831 148h1v1h-1zM831 154h1v1h-1zM839 148h1v1h-1zM839 154h1v1h-1zM847 148h1v1h-1zM847 154h1v1h-1zM855 148h1v1h-1zM855 154h1v1h-1zM863 148h1v1h-1zM863 154h1v1h-1zM871 148h1v1h-1zM871 154h1v1h-1zM879 148h1v1h-1zM879 154h1v1h-1zM887 148h1v1h-1zM887 154h1v1h-1zM895 148h1v1h-1zM895 154h1v1h-1zM903 148h1v1h-1zM903 154h1v1h-1zM911 148h1v1h-1zM911 154h1v1h-1zM919 148h1v1h-1zM919 154h1v1h-1zM927 148h1v1h-1zM927 154h1v1h-1zM935 148h1v1h-1zM935 154h1v1h-1zM943 148h1v1h-1zM943 154h1v1h-1z" fill="#1a78b4" opacity="0.55"/>
<text x="152" y="156" font-size="13" text-anchor="end" fill="#1a78b4" font-family="Liberation Sans, sans-serif"  shape-rendering="auto">GNA13</text>
<path d="M156 167.5H949" stroke="#0c0c78" stroke-width="1"/>
<path d="M156 167h1v1h-1zM157 166h1v1h-1zM157 168h1v1h-1zM158 165h1v1h-1zM158 169h1v1h-1zM164 167h1v1h-1zM165 166h1v1h-1zM165 168h1v1h-1zM166 165h1v1h-1zM166 169h1v1h-1zM172 167h1v1h-1zM173 166h1v1h-1zM173 168h1v1h-1zM174 165h1v1h-1zM174 169h1v1h-1zM180 167h1v1h-1zM181 166h1v1h-1zM181 168h1v1h-1zM182 165h1v1h-1zM182 169h1v1h-1zM188 167h1v1h-1zM189 166h1v1h-1zM189 168h1v1h-1zM190 165h1v1h-1zM190 169h1v1h-1zM196 167h1v1h-1zM197 166h1v1h-1zM197 168h1v1h-1zM198 165h1v1h-1zM198 169h1v1h-1zM204 167h1v1h-1zM205 166h1v1h-1zM205 168h1v1h-1zM206 165h1v1h-1zM206 169h1v1h-1zM212 167h1v1h-1zM213 166h1v1h-1zM213 168h1v1h-1zM214 165h1v1h-1zM214 169h1v1h-1zM220 167h1v1h-1zM221 166h1v1h-1zM221 168h1v1h-1zM222 165h1v1h-1zM222 169h1v1h-1zM228 167h1v1h-1zM229 166h1v1h-1zM229 168h1v1h-1zM230 165h1v1h-1zM230 169h1v1h-1zM236 167h1v1h-1zM237 166h1v1h-1zM237 168h1v1h-1zM238 165h1v1h-1zM238 169h1v1h-1zM244 167h1v1h-1zM245 166h1v1h-1zM245 168h1v1h-1zM246 165h1v1h-1zM246 169h1v1h-1zM252 167h1v1h-1zM253 166h1v1h-1zM253 168h1v1h-1zM254 165h1v1h-1zM254 169h1v1h-1zM260 167h1v1h-1zM261 166h1v1h-1zM261 168h1v1h-1zM262 165h1v1h-1zM262 169h1v1h-1zM268 167h1v1h-1zM269 166h1v1h-1zM269 168h1v1h-1zM270 165h1v1h-1zM270 169h1v1h-1zM276 167h1v1h-1zM277 166h1v1h-1zM277 168h1v1h-1zM278 165h1v1h-1zM278 169h1v1h-1zM284 167h1v1h-1zM285 166h1v1h-1zM285 168h1v1h-1zM286 165h1v1h-1zM286 169h1v1h-1zM292 167h1v1h-1zM293 166h1v1h-1zM293 168h1v1h-1zM294 165h1v1h-1zM294 169h1v1h-1zM300 167h1v1h-1zM301 166h1v1h-1zM301 168h1v1h-1zM302 165h1v1h-1zM302 169h1v1h-1zM308 167h1v1h-1zM309 166h1v1h-1zM309 168h1v1h-1zM310 165h1v1h-1zM310 169h1v1h-1zM316 167h1v1h-1zM317 166h1v1h-1zM317 168h1v1h-1zM318 165h1v1h-1zM318 169h1v1h-1zM324 167h1v1h-1zM325 166h1v1h-1zM325 168h1v1h-1zM326 165h1v1h-1zM326 169h1v1h-1zM332 167h1v1h-1zM333 166h1v1h-1zM333 168h1v1h-1zM334 165h1v1h-1zM334 169h1v1h-1zM340 167h1v1h-1zM341 166h1v1h-1zM341 168h1v1h-1zM342 165h1v1h-1zM342 169h1v1h-1zM348 167h1v1h-1zM349 166h1v1h-1zM349 168h1v1h-1zM350 165h1v1h-1zM350 169h1v1h-1zM356 167h1v1h-1zM357 166h1v1h-1zM357 168h1v1h-1zM358 165h1v1h-1zM358 169h1v1h-1zM364 167h1v1h-1zM365 166h1v1h-1zM365 168h1v1h-1zM366 165h1v1h-1zM366 169h1v1h-1zM372 167h1v1h-1zM373 166h1v1h-1zM373 168h1v1h-1zM374 165h1v1h-1zM374 169h1v1h-1zM380 167h1v1h-1zM381 166h1v1h-1zM381 168h1v1h-1zM382 165h1v1h-1zM382 169h1v1h-1zM388 167h1v1h-1zM389 166h1v1h-1zM389 168h1v1h-1zM390 165h1v1h-1zM390 169h1v1h-1zM396 167h1v1h-1zM397 166h1v1h-1zM397 168h1v1h-1zM398 165h1v1h-1zM398 169h1v1h-1zM404 167h1v1h-1zM405 166h1v1h-1zM405 168h1v1h-1zM406 165h1v1h-1zM406 169h1v1h-1zM412 167h1v1h-1zM413 166h1v1h-1zM413 168h1v1h-1zM414 165h1v1h-1zM414 169h1v1h-1zM420 167h1v1h-1zM421 166h1v1h-1zM421 168h1v1h-1zM422 165h1v1h-1zM422 169h1v1h-1zM428 167h1v1h-1zM429 166h1v1h-1zM429 168h1v1h-1zM430 165h1v1h-1zM430 169h1v1h-1zM436 167h1v1h-1zM437 166h1v1h-1zM437 168h1v1h-1zM438 165h1v1h-1zM438 169h1v1h-1zM444 167h1v1h-1zM445 166h1v1h-1zM445 168h1v1h-1zM446 165h1v1h-1zM446 169h1v1h-1zM452 167h1v1h-1zM453 166h1v1h-1zM453 168h1v1h-1zM454 165h1v1h-1zM454 169h1v1h-1zM460 167h1v1h-1zM461 166h1v1h-1zM461 168h1v1h-1zM462 165h1v1h-1zM462 169h1v1h-1zM468 167h1v1h-1zM469 166h1v1h-1zM469 168h1v1h-1zM470 165h1v1h-1zM470 169h1v1h-1zM476 167h1v1h-1zM477 166h1v1h-1zM477 168h1v1h-1zM478 165h1v1h-1zM478 169h1v1h-1zM484 167h1v1h-1zM485 166h1v1h-1zM485 168h1v1h-1zM486 165h1v1h-1zM486 169h1v1h-1zM492 167h1v1h-1zM493 166h1v1h-1zM493 168h1v1h-1zM494 165h1v1h-1zM494 169h1v1h-1zM500 167h1v1h-1zM501 166h1v1h-1zM501 168h1v1h-1zM502 165h1v1h-1zM502 169h1v1h-1zM508 167h1v1h-1zM509 166h1v1h-1zM509 168h1v1h-1zM510 165h1v1h-1zM510 169h1v1h-1zM516 167h1v1h-1zM517 166h1v1h-1zM517 168h1v1h-1zM518 165h1v1h-1zM518 169h1v1h-1zM524 167h1v1h-1zM525 166h1v1h-1zM525 168h1v1h-1zM526 165h1v1h-1zM526 169h1v1h-1zM532 167h1v1h-1zM533 166h1v1h-1zM533 168h1v1h-1zM534 165h1v1h-1zM534 169h1v1h-1zM540 167h1v1h-1zM541 166h1v1h-1zM541 168h1v1h-1zM542 165h1v1h-1zM542 169h1v1h-1zM548 167h1v1h-1zM549 166h1v1h-1zM549 168h1v1h-1zM550 165h1v1h-1zM550 169h1v1h-1zM556 167h1v1h-1zM557 166h1v1h-1zM557 168h1v1h-1zM558 165h1v1h-1zM558 169h1v1h-1zM564 167h1v1h-1zM565 166h1v1h-1zM565 168h1v1h-1zM566 165h1v1h-1zM566 169h1v1h-1zM572 167h1v1h-1zM573 166h1v1h-1zM573 168h1v1h-1zM574 165h1v1h-1zM574 169h1v1h-1zM580 167h1v1h-1zM581 166h1v1h-1zM581 168h1v1h-1zM582 165h1v1h-1zM582 169h1v1h-1zM588 167h1v1h-1zM589 166h1v1h-1zM589 168h1v1h-1zM590 165h1v1h-1zM590 169h1v1h-1zM596 167h1v1h-1zM597 166h1v1h-1zM597 168h1v1h-1zM598 165h1v1h-1zM598 169h1v1h-1zM604 167h1v1h-1zM605 166h1v1h-1zM605 168h1v1h-1zM606 165h1v1h-1zM606 169h1v1h-1zM612 167h1v1h-1zM613 166h1v1h-1zM613 168h1v1h-1zM614 165h1v1h-1zM614 169h1v1h-1zM620 167h1v1h-1zM621 166h1v1h-1zM621 168h1v1h-1zM622 165h1v1h-1zM622 169h1v1h-1zM628 167h1v1h-1zM629 166h1v1h-1zM629 168h1v1h-1zM630 165h1v1h-1zM630 169h1v1h-1zM636 167h1v1h-1zM637 166h1v1h-1zM637 168h1v1h-1zM638 165h1v1h-1zM638 169h1v1h-1zM644 167h1v1h-1zM645 166h1v1h-1zM645 168h1v1h-1zM646 165h1v1h-1zM646 169h1v1h-1zM652 167h1v1h-1zM653 166h1v1h-1zM653 168h1v1h-1zM654 165h1v1h-1zM654 169h1v1h-1zM660 167h1v1h-1zM661 166h1v1h-1zM661 168h1v1h-1zM662 165h1v1h-1zM662 169h1v1h-1zM668 167h1v1h-1zM669 166h1v1h-1zM669 168h1v1h-1zM670 165h1v1h-1zM670 169h1v1h-1zM676 167h1v1h-1zM677 166h1v1h-1zM677 168h1v1h-1zM678 165h1v1h-1zM678 169h1v1h-1zM684 167h1v1h-1zM685 166h1v1h-1zM685 168h1v1h-1zM686 165h1v1h-1zM686 169h1v1h-1zM692 167h1v1h-1zM693 166h1v1h-1zM693 168h1v1h-1zM694 165h1v1h-1zM694 169h1v1h-1zM700 167h1v1h-1zM701 166h1v1h-1zM701 168h1v1h-1zM702 165h1v1h-1zM702 169h1v1h-1zM708 167h1v1h-1zM709 166h1v1h-1zM709 168h1v1h-1zM710 165h1v1h-1zM710 169h1v1h-1zM716 167h1v1h-1zM717 166h1v1h-1zM717 168h1v1h-1zM718 165h1v1h-1zM718 169h1v1h-1zM724 167h1v1h-1zM725 166h1v1h-1zM725 168h1v1h-1zM726 165h1v1h-1zM726 169h1v1h-1zM732 167h1v1h-1zM733 166h1v1h-1zM733 168h1v1h-1zM734 165h1v1h-1zM734 169h1v1h-1zM740 167h1v1h-1zM741 166h1v1h-1zM741 168h1v1h-1zM742 165h1v1h-1zM742 169h1v1h-1zM748 167h1v1h-1zM749 166h1v1h-1zM749 168h1v1h-1zM750 165h1v1h-1zM750 169h1v1h-1zM756 167h1v1h-1zM757 166h1v1h-1zM757 168h1v1h-1zM758 165h1v1h-1zM758 169h1v1h-1zM764 167h1v1h-1zM765 166h1v1h-1zM765 168h1v1h-1zM766 165h1v1h-1zM766 169h1v1h-1zM772 167h1v1h-1zM773 166h1v1h-1zM773 168h1v1h-1zM774 165h1v1h-1zM774 169h1v1h-1zM780 167h1v1h-1zM781 166h1v1h-1zM781 168h1v1h-1zM782 165h1v1h-1zM782 169h1v1h-1zM788 167h1v1h-1zM789 166h1v1h-1zM789 168h1v1h-1zM790 165h1v1h-1zM790 169h1v1h-1zM796 167h1v1h-1zM797 166h1v1h-1zM797 168h1v1h-1zM798 165h1v1h-1zM798 169h1v1h-1zM804 167h1v1h-1zM805 166h1v1h-1zM805 168h1v1h-1zM806 165h1v1h-1zM806 169h1v1h-1zM812 167h1v1h-1zM813 166h1v1h-1zM813 168h1v1h-1zM814 165h1v1h-1zM814 169h1v1h-1zM820 167h1v1h-1zM821 166h1v1h-1zM821 168h1v1h-1zM822 165h1v1h-1zM822 169h1v1h-1zM828 167h1v1h-1zM829 166h1v1h-1zM829 168h1v1h-1zM830 165h1v1h-1zM830 169h1v1h-1zM836 167h1v1h-1zM837 166h1v1h-1zM837 168h1v1h-1zM838 165h1v1h-1zM838 169h1v1h-1zM844 167h1v1h-1zM845 166h1v1h-1zM845 168h1v1h-1zM846 165h1v1h-1zM846 169h1v1h-1zM852 167h1v1h-1zM853 166h1v1h-1zM853 168h1v1h-1zM854 165h1v1h-1zM854 169h1v1h-1zM860 167h1v1h-1zM861 166h1v1h-1zM861 168h1v1h-1zM862 165h1v1h-1zM862 169h1v1h-1zM868 167h1v1h-1zM869 166h1v1h-1zM869 168h1v1h-1zM870 165h1v1h-1zM870 169h1v1h-1zM876 167h1v1h-1zM877 166h1v1h-1zM877 168h1v1h-1zM878 165h1v1h-1zM878 169h1v1h-1zM884 167h1v1h-1zM885 166h1v1h-1zM885 168h1v1h-1zM886 165h1v1h-1zM886 169h1v1h-1zM892 167h1v1h-1zM893 166h1v1h-1zM893 168h1v1h-1zM894 165h1v1h-1zM894 169h1v1h-1zM900 167h1v1h-1zM901 166h1v1h-1zM901 168h1v1h-1zM902 165h1v1h-1zM902 169h1v1h-1zM908 167h1v1h-1zM909 166h1v1h-1zM909 168h1v1h-1zM910 165h1v1h-1zM910 169h1v1h-1zM916 167h1v1h-1zM917 166h1v1h-1zM917 168h1v1h-1zM918 165h1v1h-1zM918 169h1v1h-1zM924 167h1v1h-1zM925 166h1v1h-1zM925 168h1v1h-1zM926 165h1v1h-1zM926 169h1v1h-1zM932 167h1v1h-1zM933 166h1v1h-1zM933 168h1v1h-1zM934 165h1v1h-1zM934 169h1v1h-1zM940 167h1v1h-1zM941 166h1v1h-1zM941 168h1v1h-1zM942 165h1v1h-1zM942 169h1v1h-1z" fill="#0c0c78"/>
<path d="M159 164h1v1h-1zM159 170h1v1h-1zM167 164h1v1h-1zM167 170h1v1h-1zM175 164h1v1h-1zM175 170h1v1h-1zM183 164h1v1h-1zM183 170h1v1h-1zM191 164h1v1h-1zM191 170h1v1h-1zM199 164h1v1h-1zM199 170h1v1h-1zM207 164h1v1h-1zM207 170h1v1h-1zM215 164h1v1h-1zM215 170h1v1h-1zM223 164h1v1h-1zM223 170h1v1h-1zM231 164h1v1h-1zM231 170h1v1h-1zM239 164h1v1h-1zM239 170h1v1h-1zM247 164h1v1h-1zM247 170h1v1h-1zM255 164h1v1h-1zM255 170h1v1h-1zM263 164h1v1h-1zM263 170h1v1h-1zM271 164h1v1h-1zM271 170h1v1h-1zM279 164h1v1h-1zM279 170h1v1h-1zM287 164h1v1h-1zM287 170h1v1h-1zM295 164h1v1h-1zM295 170h1v1h-1zM303 164h1v1h-1zM303 170h1v1h-1zM311 164h1v1h-1zM311 170h1v1h-1zM319 164h1v1h-1zM319 170h1v1h-1zM327 164h1v1h-1zM327 170h1v1h-1zM335 164h1v1h-1zM335 170h1v1h-1zM343 164h1v1h-1zM343 170h1v1h-1zM351 164h1v1h-1zM351 170h1v1h-1zM359 164h1v1h-1zM359 170h1v1h-1zM367 164h1v1h-1zM367 170h1v1h-1zM375 164h1v1h-1zM375 170h1v1h-1zM383 164h1v1h-1zM383 170h1v1h-1zM391 164h1v1h-1zM391 170h1v1h-1zM399 164h1v1h-1zM399 170h1v1h-1zM407 164h1v1h-1zM407 170h1v1h-1zM415 164h1v1h-1zM415 170h1v1h-1zM423 164h1v1h-1zM423 170h1v1h-1zM431 164h1v1h-1zM431 170h1v1h-1zM439 164h1v1h-1zM439 170h1v1h-1zM447 164h1v1h-1zM447 170h1v1h-1zM455 164h1v1h-1zM455 170h1v1h-1zM463 164h1v1h-1zM463 170h1v1h-1zM471 164h1v1h-1zM471 170h1v1h-1zM479 164h1v1h-1zM479 170h1v1h-1zM487 164h1v1h-1zM487 170h1v1h-1zM495 164h1v1h-1zM495 170h1v1h-1zM503 164h1v1h-1zM503 170h1v1h-1zM511 164h1v1h-1zM511 170h1v1h-1zM519 164h1v1h-1zM519 170h1v1h-1zM527 164h1v1h-1zM527 170h1v1h-1zM535 164h1v1h-1zM535 170h1v1h-1zM543 164h1v1h-1zM543 170h1v1h-1zM551 164h1v1h-1zM551 170h1v1h-1zM559 164h1v1h-1zM559 170h1v1h-1zM567 164h1v1h-1zM567 170h1v1h-1zM575 164h1v1h-1zM575 170h1v1h-1zM583 164h1v1h-1zM583 170h1v1h-1zM591 164h1v1h-1zM591 170h1v1h-1zM599 164h1v1h-1zM599 170h1v1h-1zM607 164h1v1h-1zM607 170h1v1h-1zM615 164h1v1h-1zM615 170h1v1h-1zM623 164h1v1h-1zM623 170h1v1h-1zM631 164h1v1h-1zM631 170h1v1h-1zM639 164h1v1h-1zM639 170h1v1h-1zM647 164h1v1h-1zM647 170h1v1h-1zM655 164h1v1h-1zM655 170h1v1h-1zM663 164h1v1h-1zM663 170h1v1h-1zM671 164h1v1h-1zM671 170h1v1h-1zM679 164h1v1h-1zM679 170h1v1h-1zM687 164h1v1h-1zM687 170h1v1h-1zM695 164h1v1h-1zM695 170h1v1h-1zM703 164h1v1h-1zM703 170h1v1h-1zM711 164h1v1h-1zM711 170h1v1h-1zM719 164h1v1h-1zM719 170h1v1h-1zM727 164h1v1h-1zM727 170h1v1h-1zM735 164h1v1h-1zM735 170h1v1h-1zM743 164h1v1h-1zM743 170h1v1h-1zM751 164h1v1h-1zM751 170h1v1h-1zM759 164h1v1h-1zM759 170h1v1h-1zM767 164h1v1h-1zM767 170h1v1h-1zM775 164h1v1h-1zM775 170h1v1h-1zM783 164h1v1h-1zM783 170h1v1h-1zM791 164h1v1h-1zM791 170h1v1h-1zM799 164h1v1h-1zM799 170h1v1h-1zM807 164h1v1h-1zM807 170h1v1h-1zM815 164h1v1h-1zM815 170h1v1h-1zM823 164h1v1h-1zM823 170h1v1h-1zM831 164h1v1h-1zM831 170h1v1h-1zM839 164h1v1h-1zM839 170h1v1h-1zM847 164h1v1h-1zM847 170h1v1h-1zM855 164h1v1h-1zM855 170h1v1h-1zM863 164h1v1h-1zM863 170h1v1h-1zM871 164h1v1h-1zM871 170h1v1h-1zM879 164h1v1h-1zM879 170h1v1h-1zM887 164h1v1h-1zM887 170h1v1h-1zM895 164h1v1h-1zM895 170h1v1h-1zM903 164h1v1h-1zM903 170h1v1h-1zM911 164h1v1h-1zM911 170h1v1h-1zM919 164h1v1h-1zM919 170h1v1h-1zM927 164h1v1h-1zM927 170h1v1h-1zM935 164h1v1h-1zM935 170h1v1h-1zM943 164h1v1h-1zM943 170h1v1h-1z" fill="#0c0c78" opacity="0.55"/>
<text x="152" y="172" font-size="13" text-anchor="end" fill="#0c0c78" font-family="Liberation Sans, sans-serif"  shape-rendering="auto">GNA13</text>
<text x="490.7" y="188" font-size="11" text-anchor="start" fill="#000" font-family="Liberation Sans, sans-serif"  textLength="123.42" lengthAdjust="spacing" shape-rendering="auto">RefSeq genes from NCBI</text>
<text x="59.73" y="203" font-size="13" text-anchor="start" fill="#0c0c78" font-family="Liberation Sans, sans-serif"  textLength="92.70" lengthAdjust="spacing" shape-rendering="auto">RefSeq Curated</text>
<path d="M156 198.5H949" stroke="#0c0c78" stroke-width="1"/>
<text x="444.6" y="219" font-size="11" text-anchor="start" fill="#000" font-family="Liberation Sans, sans-serif"  textLength="214.80" lengthAdjust="spacing" shape-rendering="auto">Publications: Sequences in Scientific Articles</text>
<text x="152" y="234" font-size="13" text-anchor="end" fill="#000" font-family="Liberation Sans, sans-serif"  shape-rendering="auto">Sequences</text>
<text x="152" y="250" font-size="13" text-anchor="end" fill="#000" font-family="Liberation Sans, sans-serif"  shape-rendering="auto">SNPs</text>
<text x="366.98" y="267" font-size="13" text-anchor="start" fill="#006400" font-family="Liberation Sans, sans-serif"  textLength="370.65" lengthAdjust="spacing" shape-rendering="auto">OMIM Gene Phenotypes - Dark Green Can Be Disease-causing</text>
<text x="152" y="281" font-size="13" text-anchor="end" fill="#006400" font-family="Liberation Sans, sans-serif"  shape-rendering="auto">OMIM Genes</text>
<rect x="156" y="269" width="793" height="15" fill="#bebebe"/>
<text x="435.7" y="297" font-size="11" text-anchor="start" fill="#000" font-family="Liberation Sans, sans-serif"  textLength="232.76" lengthAdjust="spacing" shape-rendering="auto">Short Genetic Variants from dbSNP release 155</text>
<text x="25.74" y="312" font-size="13" text-anchor="start" fill="#000" font-family="Liberation Sans, sans-serif"  textLength="126.67" lengthAdjust="spacing" shape-rendering="auto">Common dbSNP(155)</text>
<text x="265.75" y="329" font-size="13" text-anchor="start" fill="#000" font-family="Liberation Sans, sans-serif"  textLength="572.46" lengthAdjust="spacing" shape-rendering="auto">Gene Expression in 54 tissues from GTEx RNA-seq of 17382 samples, 948 donors (V8, Aug 2019)</text>
<rect x="156.5" y="332.5" width="377" height="53" fill="#fff" stroke="#ececec" stroke-width="1"/>
<rect x="156" y="339" width="5" height="46" fill="#FFA54F"/>
<rect x="163" y="340" width="5" height="45" fill="#EE9A00"/>
<rect x="170" y="344" width="5" height="41" fill="#8FBC8F"/>
<rect x="177" y="341" width="5" height="44" fill="#8B1C62"/>
<rect x="184" y="340" width="5" height="45" fill="#EE6A50"/>
<rect x="191" y="339" width="5" height="46" fill="#FF0000"/>
<rect x="198" y="340" width="5" height="45" fill="#CDB79E"/>
<rect x="205" y="352" width="5" height="33" fill="#EEEE00"/>
<rect x="212" y="353" width="5" height="32" fill="#EEEE00"/>
<rect x="219" y="350" width="5" height="35" fill="#EEEE00"/>
<rect x="226" y="346" width="5" height="39" fill="#EEEE00"/>
<rect x="233" y="348" width="5" height="37" fill="#EEEE00"/>
<rect x="240" y="353" width="5" height="32" fill="#EEEE00"/>
<rect x="247" y="353" width="5" height="32" fill="#EEEE00"/>
<rect x="254" y="353" width="5" height="32" fill="#EEEE00"/>
<rect x="261" y="351" width="5" height="34" fill="#EEEE00"/>
<rect x="268" y="353" width="5" height="32" fill="#EEEE00"/>
<rect x="275" y="353" width="5" height="32" fill="#EEEE00"/>
<rect x="282" y="340" width="5" height="45" fill="#EEEE00"/>
<rect x="289" y="350" width="5" height="35" fill="#EEEE00"/>
<rect x="296" y="342" width="5" height="43" fill="#00CDCD"/>
<rect x="303" y="332" width="5" height="53" fill="#EE82EE"/>
<rect x="310" y="341" width="5" height="44" fill="#9AC0CD"/>
<rect x="317" y="343" width="5" height="42" fill="#EED5D2"/>
<rect x="324" y="341" width="5" height="44" fill="#EED5D2"/>
<rect x="331" y="339" width="5" height="46" fill="#CDB79E"/>
<rect x="338" y="342" width="5" height="43" fill="#EEC591"/>
<rect x="345" y="342" width="5" height="43" fill="#8B7355"/>
<rect x="352" y="349" width="5" height="36" fill="#8B7355"/>
<rect x="359" y="342" width="5" height="43" fill="#CDAA7D"/>
<rect x="366" y="341" width="5" height="44" fill="#EED5D2"/>
<rect x="373" y="353" width="5" height="32" fill="#B452CD"/>
<rect x="380" y="360" width="5" height="25" fill="#7A378B"/>
<rect x="387" y="352" width="5" height="33" fill="#CDB79E"/>
<rect x="394" y="350" width="5" height="35" fill="#CDB79E"/>
<rect x="401" y="358" width="5" height="27" fill="#CDB79E"/>
<rect x="408" y="334" width="5" height="51" fill="#9ACD32"/>
<rect x="415" y="349" width="5" height="36" fill="#CDB79E"/>
<rect x="422" y="343" width="5" height="42" fill="#7A67EE"/>
<rect x="429" y="341" width="5" height="44" fill="#FFD700"/>
<rect x="436" y="340" width="5" height="45" fill="#FFB6C1"/>
<rect x="443" y="360" width="5" height="25" fill="#CD9B1D"/>
<rect x="450" y="350" width="5" height="35" fill="#B4EEB4"/>
<rect x="457" y="345" width="5" height="40" fill="#D9D9D9"/>
<rect x="464" y="346" width="5" height="39" fill="#3A5FCD"/>
<rect x="471" y="346" width="5" height="39" fill="#1E90FF"/>
<rect x="478" y="342" width="5" height="43" fill="#CDB79E"/>
<rect x="485" y="341" width="5" height="44" fill="#CDB79E"/>
<rect x="492" y="350" width="5" height="35" fill="#FFD39B"/>
<rect x="499" y="347" width="5" height="38" fill="#A6A6A6"/>
<rect x="506" y="343" width="5" height="42" fill="#008B45"/>
<rect x="513" y="342" width="5" height="43" fill="#EED5D2"/>
<rect x="520" y="344" width="5" height="41" fill="#EED5D2"/>
<rect x="527" y="338" width="5" height="47" fill="#FF00FF"/>
<rect x="156" y="386" width="793" height="2" fill="#000070"/>
<text x="152" y="366" font-size="13" text-anchor="end" fill="#000" font-family="Liberation Sans, sans-serif"  shape-rendering="auto">GNA13</text>
<text x="280.53" y="403" font-size="13" text-anchor="start" fill="#000" font-family="Liberation Sans, sans-serif"  textLength="541.92" lengthAdjust="spacing" shape-rendering="auto">H3K27Ac Mark (Often Found Near Active Regulatory Elements) on 7 cell lines from ENCODE</text>
<text x="12.43" y="417" font-size="13" text-anchor="start" fill="#000" font-family="Liberation Sans, sans-serif"  textLength="104.91" lengthAdjust="spacing" shape-rendering="auto">Layered H3K27Ac</text>
<rect x="156" y="433" width="793" height="1" fill="#5a3282"/>
<rect x="156" y="434" width="793" height="1" fill="#2c0838"/>
<rect x="156" y="432" width="216" height="1" fill="#f45c5c"/>
<rect x="156" y="433" width="216" height="1" fill="#c83c48"/>
<text x="141.2" y="448" font-size="13" text-anchor="end" fill="#333399" font-family="Liberation Sans, sans-serif"  shape-rendering="auto">4.88</text>
<path d="M145 449.5H152" stroke="#333399" stroke-width="1"/>
<text x="405.41" y="448.5" font-size="13" text-anchor="start" fill="#333399" font-family="Liberation Sans, sans-serif"  textLength="293.38" lengthAdjust="spacing" shape-rendering="auto">100 vertebrates Basewise Conservation by PhyloP</text>
<text x="13.31" y="473" font-size="13" text-anchor="start" fill="#333399" font-family="Liberation Sans, sans-serif"  textLength="86.46" lengthAdjust="spacing" shape-rendering="auto">100 Vert. Cons</text>
<text x="141.2" y="498" font-size="13" text-anchor="end" fill="#993333" font-family="Liberation Sans, sans-serif"  shape-rendering="auto">-4.5</text>
<path d="M145 499.5H152" stroke="#993333" stroke-width="1"/>
<defs><filter id="bl" x="-10%" y="-200%" width="120%" height="500%"><feGaussianBlur stdDeviation="0.45"/></filter></defs>
<g filter="url(#bl)" shape-rendering="auto">
<path d="M171 475H205L207 475.8H207V477H171Z" fill="#3030ff" opacity="0.4"/>
<path d="M171 475.2Q175 474.6 180 475.4V476.8Q175 477.2 171 476.8Z" fill="#2020ff" opacity="0.85"/>
<path d="M205 475.6Q209 475.6 214 476V477.2H205Z" fill="#0000f0" opacity="1.0"/>
<path d="M242 475.9Q248 475.7 252 475.5L254 474.8H271L274 475.6Q278 475.8 282 475.9V477Q278 476.9 274 476.7L271 476H254L252 476.7Q248 476.9 242 477Z" fill="#ff1818" opacity="0.8"/>
<path d="M315 475.2H350L356 476.2V477.0H315Z" fill="#b4b430" opacity="0.4"/>
<path d="M315 475.2H323V477.0H315Z" fill="#a8a818" opacity="0.8"/>
<path d="M349 475.2L355 476.09999999999997V477.0H349Z" fill="#a8a818" opacity="0.6"/>
<path d="M387 475.2H422L428 476.2V477.0H387Z" fill="#b4b430" opacity="0.4"/>
<path d="M387 475.2H395V477.0H387Z" fill="#a8a818" opacity="0.8"/>
<path d="M421 475.2L427 476.09999999999997V477.0H421Z" fill="#a8a818" opacity="0.6"/>
<path d="M456 478.3L464 476.6H500V477.6H464V479.3H500V480.3H464Z" fill="#b0b020" opacity="0.55"/>
<path d="M456 478.3L464 476.6V480.3Z" fill="#a8a810" opacity="0.9"/>
<path d="M492 476.6H500V477.6H492ZM492 479.3H500V480.3H492Z" fill="#a8a810" opacity="0.6"/>
<path d="M530 475.9Q536 475.7 540 475.5L542 474.8H559L562 475.6Q566 475.8 570 475.9V477Q566 476.9 562 476.7L559 476H542L540 476.7Q536 476.9 530 477Z" fill="#ff1818" opacity="0.8"/>
<path d="M603 475H637L639 475.8H639V477H603Z" fill="#3030ff" opacity="0.4"/>
<path d="M603 475.2Q607 474.6 612 475.4V476.8Q607 477.2 603 476.8Z" fill="#2020ff" opacity="0.85"/>
<path d="M637 475.6Q641 475.6 646 476V477.2H637Z" fill="#0000f0" opacity="1.0"/>
<path d="M675 475.2H710L716 476.2V477.0H675Z" fill="#b4b430" opacity="0.4"/>
<path d="M675 475.2H683V477.0H675Z" fill="#a8a818" opacity="0.8"/>
<path d="M709 475.2L715 476.09999999999997V477.0H709Z" fill="#a8a818" opacity="0.6"/>
<path d="M747 475.2H782L788 476.2V477.0H747Z" fill="#b4b430" opacity="0.4"/>
<path d="M747 475.2H755V477.0H747Z" fill="#a8a818" opacity="0.8"/>
<path d="M781 475.2L787 476.09999999999997V477.0H781Z" fill="#a8a818" opacity="0.6"/>
<path d="M817 474.8H855V475.9H817Z" fill="#50e050" opacity="0.3"/>
<path d="M833 474.8H839V476.9H833Z" fill="#00e000" opacity="1.0"/>
<path d="M890 475.9Q896 475.7 900 475.5L902 474.8H919L922 475.6Q926 475.8 930 475.9V477Q926 476.9 922 476.7L919 476H902L900 476.7Q896 476.9 890 477Z" fill="#ff1818" opacity="0.8"/>
</g>
<text x="444.63" y="515" font-size="13" text-anchor="start" fill="#0c0c78" font-family="Liberation Sans, sans-serif"  textLength="214.74" lengthAdjust="spacing" shape-rendering="auto">Multiz Alignments of 100 Vertebrates</text>
<text x="152" y="529" font-size="13" text-anchor="end" fill="#e88a00" font-family="Liberation Sans, sans-serif"  shape-rendering="auto">Gaps</text>
<text x="152" y="544" font-size="13" text-anchor="end" fill="#0c0c78" font-family="Liberation Sans, sans-serif"  shape-rendering="auto">Human</text>
<text x="152" y="559" font-size="13" text-anchor="end" fill="#0c0c78" font-family="Liberation Sans, sans-serif"  shape-rendering="auto">Rhesus</text>
<text x="152" y="574" font-size="13" text-anchor="end" fill="#006400" font-family="Liberation Sans, sans-serif"  shape-rendering="auto">Mouse</text>
<text x="152" y="589" font-size="13" text-anchor="end" fill="#0c0c78" font-family="Liberation Sans, sans-serif"  shape-rendering="auto">Dog</text>
<text x="152" y="604" font-size="13" text-anchor="end" fill="#006400" font-family="Liberation Sans, sans-serif"  shape-rendering="auto">Elephant</text>
<text x="152" y="619" font-size="13" text-anchor="end" fill="#006400" font-family="Liberation Sans, sans-serif"  shape-rendering="auto">Chicken</text>
<text x="152" y="634" font-size="13" text-anchor="end" fill="#0c0c78" font-family="Liberation Sans, sans-serif"  shape-rendering="auto">X_tropicalis</text>
<text x="152" y="649" font-size="13" text-anchor="end" fill="#006400" font-family="Liberation Sans, sans-serif"  shape-rendering="auto">Zebrafish</text>
<text x="190.5" y="544" font-size="13" text-anchor="middle" fill="#0c0c78" font-family="Liberation Sans, sans-serif"  shape-rendering="auto">G</text>
<text x="190.5" y="559" font-size="13" text-anchor="middle" fill="#0c0c78" font-family="Liberation Sans, sans-serif"  shape-rendering="auto">G</text>
<text x="262.5" y="544" font-size="13" text-anchor="middle" fill="#0c0c78" font-family="Liberation Sans, sans-serif"  shape-rendering="auto">A</text>
<text x="262.5" y="559" font-size="13" text-anchor="middle" fill="#0c0c78" font-family="Liberation Sans, sans-serif"  shape-rendering="auto">A</text>
<text x="334.5" y="544" font-size="13" text-anchor="middle" fill="#0c0c78" font-family="Liberation Sans, sans-serif"  shape-rendering="auto">C</text>
<text x="334.5" y="559" font-size="13" text-anchor="middle" fill="#0c0c78" font-family="Liberation Sans, sans-serif"  shape-rendering="auto">C</text>
<text x="406.5" y="544" font-size="13" text-anchor="middle" fill="#0c0c78" font-family="Liberation Sans, sans-serif"  shape-rendering="auto">C</text>
<text x="406.5" y="559" font-size="13" text-anchor="middle" fill="#0c0c78" font-family="Liberation Sans, sans-serif"  shape-rendering="auto">C</text>
<text x="478.5" y="544" font-size="13" text-anchor="middle" fill="#0c0c78" font-family="Liberation Sans, sans-serif"  shape-rendering="auto">C</text>
<text x="478.5" y="559" font-size="13" text-anchor="middle" fill="#0c0c78" font-family="Liberation Sans, sans-serif"  shape-rendering="auto">C</text>
<text x="550.5" y="544" font-size="13" text-anchor="middle" fill="#0c0c78" font-family="Liberation Sans, sans-serif"  shape-rendering="auto">A</text>
<text x="550.5" y="559" font-size="13" text-anchor="middle" fill="#0c0c78" font-family="Liberation Sans, sans-serif"  shape-rendering="auto">A</text>
<text x="622.5" y="544" font-size="13" text-anchor="middle" fill="#0c0c78" font-family="Liberation Sans, sans-serif"  shape-rendering="auto">G</text>
<text x="622.5" y="559" font-size="13" text-anchor="middle" fill="#0c0c78" font-family="Liberation Sans, sans-serif"  shape-rendering="auto">G</text>
<text x="694.5" y="544" font-size="13" text-anchor="middle" fill="#0c0c78" font-family="Liberation Sans, sans-serif"  shape-rendering="auto">C</text>
<text x="694.5" y="559" font-size="13" text-anchor="middle" fill="#0c0c78" font-family="Liberation Sans, sans-serif"  shape-rendering="auto">C</text>
<text x="766.5" y="544" font-size="13" text-anchor="middle" fill="#0c0c78" font-family="Liberation Sans, sans-serif"  shape-rendering="auto">C</text>
<text x="766.5" y="559" font-size="13" text-anchor="middle" fill="#0c0c78" font-family="Liberation Sans, sans-serif"  shape-rendering="auto">C</text>
<text x="838.5" y="544" font-size="13" text-anchor="middle" fill="#0c0c78" font-family="Liberation Sans, sans-serif"  shape-rendering="auto">T</text>
<text x="838.5" y="559" font-size="13" text-anchor="middle" fill="#0c0c78" font-family="Liberation Sans, sans-serif"  shape-rendering="auto">T</text>
<text x="910.5" y="544" font-size="13" text-anchor="middle" fill="#0c0c78" font-family="Liberation Sans, sans-serif"  shape-rendering="auto">A</text>
<text x="910.5" y="559" font-size="13" text-anchor="middle" fill="#0c0c78" font-family="Liberation Sans, sans-serif"  shape-rendering="auto">A</text>
<path d="M186 569.5h7M186 572.5h7M186 599.5h7M186 602.5h7M186 614.5h7M186 617.5h7M186 629.5h7M186 632.5h7M186 644.5h7M186 647.5h7M188 585.5h4M258 569.5h7M258 572.5h7M258 599.5h7M258 602.5h7M258 614.5h7M258 617.5h7M258 629.5h7M258 632.5h7M258 644.5h7M258 647.5h7M260 585.5h4M330 569.5h7M330 572.5h7M330 599.5h7M330 602.5h7M330 614.5h7M330 617.5h7M330 629.5h7M330 632.5h7M330 644.5h7M330 647.5h7M332 585.5h4M402 569.5h7M402 572.5h7M402 599.5h7M402 602.5h7M402 614.5h7M402 617.5h7M402 629.5h7M402 632.5h7M402 644.5h7M402 647.5h7M404 585.5h4M474 569.5h7M474 572.5h7M474 599.5h7M474 602.5h7M474 614.5h7M474 617.5h7M474 629.5h7M474 632.5h7M474 644.5h7M474 647.5h7M476 585.5h4M546 569.5h7M546 572.5h7M546 599.5h7M546 602.5h7M546 614.5h7M546 617.5h7M546 629.5h7M546 632.5h7M546 644.5h7M546 647.5h7M548 585.5h4M618 569.5h7M618 572.5h7M618 599.5h7M618 602.5h7M618 614.5h7M618 617.5h7M618 629.5h7M618 632.5h7M618 644.5h7M618 647.5h7M620 585.5h4M690 569.5h7M690 572.5h7M690 599.5h7M690 602.5h7M690 614.5h7M690 617.5h7M690 629.5h7M690 632.5h7M690 644.5h7M690 647.5h7M692 585.5h4M762 569.5h7M762 572.5h7M762 599.5h7M762 602.5h7M762 614.5h7M762 617.5h7M762 629.5h7M762 632.5h7M762 644.5h7M762 647.5h7M764 585.5h4M834 569.5h7M834 572.5h7M834 599.5h7M834 602.5h7M834 614.5h7M834 617.5h7M834 629.5h7M834 632.5h7M834 644.5h7M834 647.5h7M836 585.5h4M906 569.5h7M906 572.5h7M906 599.5h7M906 602.5h7M906 614.5h7M906 617.5h7M906 629.5h7M906 632.5h7M906 644.5h7M906 647.5h7M908 585.5h4" stroke="#0c0c78" stroke-width="1" opacity="0.5"/>
<text x="440.63" y="665" font-size="13" text-anchor="start" fill="#000" font-family="Liberation Sans, sans-serif"  textLength="223.28" lengthAdjust="spacing" shape-rendering="auto">Repeating Elements by RepeatMasker</text>
<text x="152" y="679" font-size="13" text-anchor="end" fill="#000" font-family="Liberation Sans, sans-serif"  shape-rendering="auto">RepeatMasker</text>
<rect x="156" y="667" width="793" height="15" fill="#000"/>
</svg></body></html>
